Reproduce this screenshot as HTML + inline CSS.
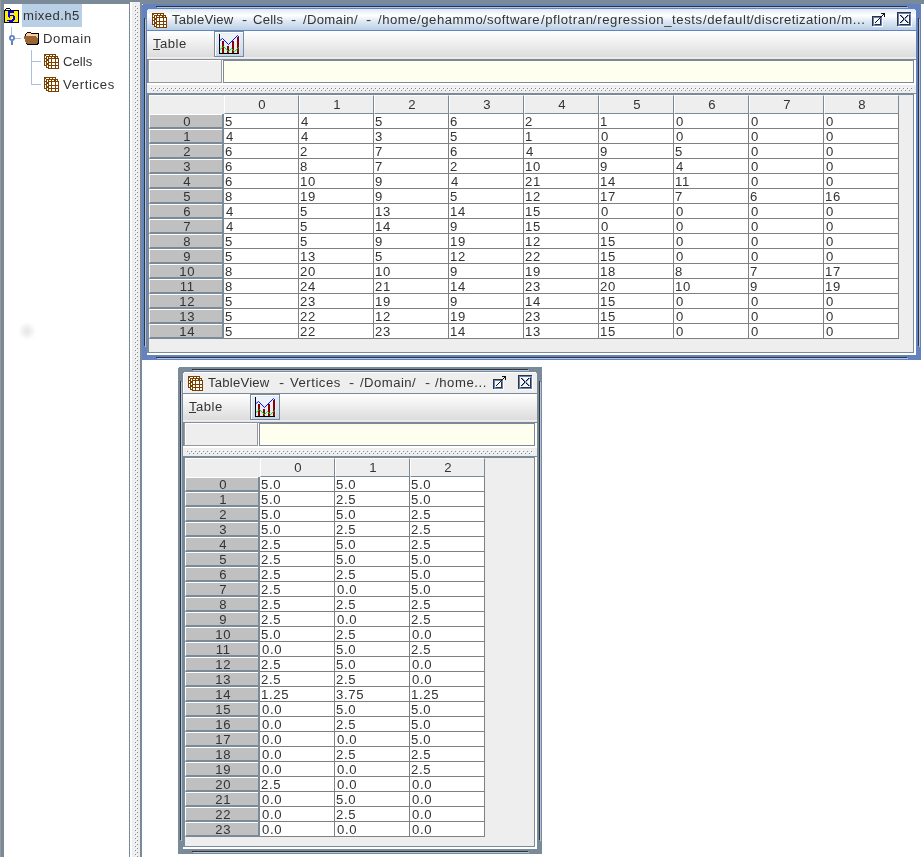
<!DOCTYPE html><html><head><meta charset="utf-8"><title>HDFView</title><style>
html,body{margin:0;padding:0}
body{width:924px;height:857px;position:relative;overflow:hidden;background:#fff;font-family:"Liberation Sans",sans-serif;font-size:12.5px;color:#333}
.abs{position:absolute}
.tx{position:absolute;height:14px;line-height:14px;white-space:pre;transform-origin:0 0}
.btn{position:absolute;width:30px;height:26px;box-sizing:border-box;border:1px solid #7a8a99;background:linear-gradient(#e6eef7 0,#dfe9f4 40%,#c3d6e9 100%);box-shadow:inset 1px 1px 0 #fff}
.ch{position:absolute;width:75px;height:19px;box-sizing:border-box;border-left:1px solid #fff;border-top:1px solid #fff;border-right:1px solid #7a8a99;border-bottom:1px solid #7a8a99;background:#eee;text-align:center}
.rh{position:absolute;width:73px;height:15px;box-sizing:border-box;border-left:1px solid #fff;border-top:1px solid #fff;border-bottom:2px solid #7a8a99;background:#c0c0c0}
.dc{position:absolute;height:14px;line-height:14px;white-space:nowrap;letter-spacing:.6px;transform-origin:0 0;transform:scaleX(1.05)}
.ct{position:absolute;width:60px;height:14px;line-height:14px;text-align:center;white-space:nowrap;letter-spacing:.6px;text-indent:.6px;transform-origin:50% 0;transform:scaleX(1.05)}
#tl{position:absolute;left:0;top:0;width:924px;height:857px;will-change:transform}

</style></head><body>
<div class="abs" style="left:0px;top:0px;width:924px;height:2px;background:#7a8a99"></div>
<div class="abs" style="left:0px;top:2px;width:130px;height:2px;background:#7a8a99"></div>
<div class="abs" style="left:140px;top:2px;width:784px;height:2px;background:#7a8a99"></div>
<div class="abs" style="left:0px;top:0px;width:1px;height:857px;background:#999"></div>
<div class="abs" style="left:1px;top:0px;width:3px;height:857px;background:#7a8a99"></div>
<div class="abs" style="left:129px;top:2px;width:1px;height:855px;background:#7a8a99"></div>
<div class="abs" style="left:132px;top:2px;width:8px;height:855px;background:#eee"></div>
<svg class="abs" style="left:134px;top:5px" width="4" height="852" shape-rendering="crispEdges"><defs><pattern id="bp1" width="4" height="4" patternUnits="userSpaceOnUse"><rect x="0" y="0" width="1" height="1" fill="#fff"/><rect x="1" y="1" width="1" height="1" fill="#7a8a99"/><rect x="2" y="2" width="1" height="1" fill="#fff"/><rect x="3" y="3" width="1" height="1" fill="#7a8a99"/></pattern></defs><rect width="4" height="852" fill="url(#bp1)"/></svg>
<div class="abs" style="left:140px;top:2px;width:2px;height:855px;background:#7a8a99"></div>
<div class="abs" style="left:17px;top:321px;width:20px;height:20px;background:radial-gradient(circle closest-side,#e6e6e6,#f1f1f1 45%,#fbfbfb 75%,#fff 100%)"></div>
<div class="abs" style="left:22px;top:4px;width:60px;height:23px;background:#b8cfe5"></div>
<svg class="abs" style="left:4px;top:8px" width="15" height="15" viewBox="0 0 15 15" shape-rendering="crispEdges"><rect x="2" y="0" width="4" height="1" fill="#000"/><rect x="1" y="1" width="1" height="1" fill="#000"/><rect x="2" y="1" width="4" height="1" fill="#fff"/><rect x="6" y="1" width="1" height="1" fill="#000"/><rect x="0" y="2" width="15" height="1" fill="#000"/><rect x="0" y="3" width="1" height="1" fill="#000"/><rect x="1" y="3" width="3" height="1" fill="#ffee00"/><rect x="4" y="3" width="6" height="1" fill="#0000ff"/><rect x="10" y="3" width="4" height="1" fill="#ffee00"/><rect x="14" y="3" width="1" height="1" fill="#000"/><rect x="0" y="4" width="1" height="1" fill="#000"/><rect x="1" y="4" width="3" height="1" fill="#ffee00"/><rect x="4" y="4" width="6" height="1" fill="#0000ff"/><rect x="10" y="4" width="4" height="1" fill="#ffee00"/><rect x="14" y="4" width="1" height="1" fill="#000"/><rect x="0" y="5" width="1" height="1" fill="#000"/><rect x="1" y="5" width="3" height="1" fill="#ffee00"/><rect x="4" y="5" width="2" height="1" fill="#0000ff"/><rect x="6" y="5" width="8" height="1" fill="#ffee00"/><rect x="14" y="5" width="1" height="1" fill="#000"/><rect x="0" y="6" width="1" height="1" fill="#000"/><rect x="1" y="6" width="3" height="1" fill="#ffee00"/><rect x="4" y="6" width="2" height="1" fill="#0000ff"/><rect x="6" y="6" width="8" height="1" fill="#ffee00"/><rect x="14" y="6" width="1" height="1" fill="#000"/><rect x="0" y="7" width="1" height="1" fill="#000"/><rect x="1" y="7" width="3" height="1" fill="#ffee00"/><rect x="4" y="7" width="6" height="1" fill="#0000ff"/><rect x="10" y="7" width="4" height="1" fill="#ffee00"/><rect x="14" y="7" width="1" height="1" fill="#000"/><rect x="0" y="8" width="1" height="1" fill="#000"/><rect x="1" y="8" width="3" height="1" fill="#ffee00"/><rect x="4" y="8" width="2" height="1" fill="#0000ff"/><rect x="6" y="8" width="3" height="1" fill="#ffee00"/><rect x="9" y="8" width="2" height="1" fill="#0000ff"/><rect x="11" y="8" width="3" height="1" fill="#ffee00"/><rect x="14" y="8" width="1" height="1" fill="#000"/><rect x="0" y="9" width="1" height="1" fill="#000"/><rect x="1" y="9" width="4" height="1" fill="#ffee00"/><rect x="5" y="9" width="1" height="1" fill="#0000ff"/><rect x="6" y="9" width="3" height="1" fill="#ffee00"/><rect x="9" y="9" width="2" height="1" fill="#0000ff"/><rect x="11" y="9" width="3" height="1" fill="#ffee00"/><rect x="14" y="9" width="1" height="1" fill="#000"/><rect x="0" y="10" width="1" height="1" fill="#000"/><rect x="1" y="10" width="8" height="1" fill="#ffee00"/><rect x="9" y="10" width="2" height="1" fill="#0000ff"/><rect x="11" y="10" width="3" height="1" fill="#ffee00"/><rect x="14" y="10" width="1" height="1" fill="#000"/><rect x="0" y="11" width="1" height="1" fill="#000"/><rect x="1" y="11" width="7" height="1" fill="#ffee00"/><rect x="8" y="11" width="3" height="1" fill="#0000ff"/><rect x="11" y="11" width="3" height="1" fill="#ffee00"/><rect x="14" y="11" width="1" height="1" fill="#000"/><rect x="0" y="12" width="1" height="1" fill="#000"/><rect x="1" y="12" width="2" height="1" fill="#ffee00"/><rect x="3" y="12" width="7" height="1" fill="#0000ff"/><rect x="10" y="12" width="4" height="1" fill="#ffee00"/><rect x="14" y="12" width="1" height="1" fill="#000"/><rect x="0" y="13" width="1" height="1" fill="#000"/><rect x="1" y="13" width="4" height="1" fill="#ffee00"/><rect x="5" y="13" width="4" height="1" fill="#0000ff"/><rect x="9" y="13" width="5" height="1" fill="#ffee00"/><rect x="14" y="13" width="1" height="1" fill="#000"/><rect x="0" y="14" width="15" height="1" fill="#000"/></svg>
<div class="abs" style="left:11px;top:27px;width:1px;height:8px;background:#a9c0e0"></div>
<div class="abs" style="left:15px;top:38px;width:6px;height:1px;background:#a9c0e0"></div>
<svg class="abs" style="left:9px;top:35px" width="6" height="10" viewBox="0 0 6 10"><circle cx="3" cy="3" r="2.1" fill="#fff" stroke="#6382bf" stroke-width="1.8"/><rect x="2" y="6" width="2" height="4" fill="#6382bf" shape-rendering="crispEdges"/></svg>
<svg class="abs" style="left:24px;top:32px" width="15" height="13" viewBox="0 0 15 13" shape-rendering="crispEdges"><rect x="3" y="0" width="4" height="1" fill="#000"/><rect x="2" y="1" width="1" height="1" fill="#000"/><rect x="3" y="1" width="4" height="1" fill="#ffcc99"/><rect x="7" y="1" width="8" height="1" fill="#000"/><rect x="1" y="2" width="1" height="1" fill="#000"/><rect x="2" y="2" width="11" height="1" fill="#ffcc99"/><rect x="13" y="2" width="1" height="1" fill="#ffcc99"/><rect x="14" y="2" width="1" height="1" fill="#000"/><rect x="1" y="3" width="1" height="1" fill="#000"/><rect x="2" y="3" width="11" height="1" fill="#ffcc99"/><rect x="13" y="3" width="1" height="1" fill="#ffcc99"/><rect x="14" y="3" width="1" height="1" fill="#000"/><rect x="0" y="4" width="12" height="1" fill="#996633"/><rect x="12" y="4" width="2" height="1" fill="#ffcc99"/><rect x="14" y="4" width="1" height="1" fill="#000"/><rect x="0" y="5" width="13" height="1" fill="#996633"/><rect x="13" y="5" width="1" height="1" fill="#ffcc99"/><rect x="14" y="5" width="1" height="1" fill="#000"/><rect x="0" y="6" width="13" height="1" fill="#996633"/><rect x="13" y="6" width="1" height="1" fill="#996633"/><rect x="14" y="6" width="1" height="1" fill="#000"/><rect x="1" y="7" width="12" height="1" fill="#996633"/><rect x="13" y="7" width="1" height="1" fill="#996633"/><rect x="14" y="7" width="1" height="1" fill="#000"/><rect x="1" y="8" width="12" height="1" fill="#996633"/><rect x="13" y="8" width="1" height="1" fill="#996633"/><rect x="14" y="8" width="1" height="1" fill="#000"/><rect x="1" y="9" width="12" height="1" fill="#996633"/><rect x="13" y="9" width="1" height="1" fill="#996633"/><rect x="14" y="9" width="1" height="1" fill="#000"/><rect x="2" y="10" width="12" height="1" fill="#996633"/><rect x="14" y="10" width="1" height="1" fill="#000"/><rect x="2" y="11" width="1" height="1" fill="#000"/><rect x="3" y="11" width="10" height="1" fill="#996633"/><rect x="13" y="11" width="2" height="1" fill="#000"/><rect x="3" y="12" width="11" height="1" fill="#000"/></svg>
<div class="abs" style="left:31px;top:50px;width:1px;height:35px;background:#a9c0e0"></div>
<div class="abs" style="left:31px;top:61px;width:10px;height:1px;background:#a9c0e0"></div>
<div class="abs" style="left:31px;top:84px;width:10px;height:1px;background:#a9c0e0"></div>
<svg class="abs" style="left:44px;top:54px" width="15" height="15" viewBox="0 0 15 15" shape-rendering="crispEdges"><rect x="0" y="0" width="12" height="1" fill="#7b3f00"/><rect x="0" y="1" width="2" height="1" fill="#7b3f00"/><rect x="2" y="1" width="3" height="1" fill="#fff"/><rect x="5" y="1" width="1" height="1" fill="#7b3f00"/><rect x="6" y="1" width="2" height="1" fill="#fff"/><rect x="8" y="1" width="1" height="1" fill="#7b3f00"/><rect x="9" y="1" width="2" height="1" fill="#fff"/><rect x="11" y="1" width="1" height="1" fill="#7b3f00"/><rect x="0" y="2" width="1" height="1" fill="#7b3f00"/><rect x="1" y="2" width="1" height="1" fill="#fff"/><rect x="2" y="2" width="12" height="1" fill="#7b3f00"/><rect x="0" y="3" width="1" height="1" fill="#7b3f00"/><rect x="1" y="3" width="1" height="1" fill="#fff"/><rect x="2" y="3" width="1" height="1" fill="#7b3f00"/><rect x="3" y="3" width="1" height="1" fill="#fff"/><rect x="4" y="3" width="1" height="1" fill="#7b3f00"/><rect x="5" y="3" width="2" height="1" fill="#fff"/><rect x="7" y="3" width="1" height="1" fill="#7b3f00"/><rect x="8" y="3" width="2" height="1" fill="#fff"/><rect x="10" y="3" width="2" height="1" fill="#7b3f00"/><rect x="12" y="3" width="1" height="1" fill="#fff"/><rect x="13" y="3" width="1" height="1" fill="#7b3f00"/><rect x="0" y="4" width="3" height="1" fill="#7b3f00"/><rect x="3" y="4" width="1" height="1" fill="#fff"/><rect x="4" y="4" width="11" height="1" fill="#7b3f00"/><rect x="0" y="5" width="1" height="1" fill="#7b3f00"/><rect x="1" y="5" width="1" height="1" fill="#fff"/><rect x="2" y="5" width="3" height="1" fill="#7b3f00"/><rect x="5" y="5" width="2" height="1" fill="#fff"/><rect x="7" y="5" width="1" height="1" fill="#7b3f00"/><rect x="8" y="5" width="3" height="1" fill="#fff"/><rect x="11" y="5" width="1" height="1" fill="#7b3f00"/><rect x="12" y="5" width="2" height="1" fill="#fff"/><rect x="14" y="5" width="1" height="1" fill="#7b3f00"/><rect x="0" y="6" width="1" height="1" fill="#7b3f00"/><rect x="1" y="6" width="1" height="1" fill="#fff"/><rect x="2" y="6" width="3" height="1" fill="#7b3f00"/><rect x="5" y="6" width="2" height="1" fill="#fff"/><rect x="7" y="6" width="1" height="1" fill="#7b3f00"/><rect x="8" y="6" width="3" height="1" fill="#fff"/><rect x="11" y="6" width="1" height="1" fill="#7b3f00"/><rect x="12" y="6" width="2" height="1" fill="#fff"/><rect x="14" y="6" width="1" height="1" fill="#7b3f00"/><rect x="0" y="7" width="3" height="1" fill="#7b3f00"/><rect x="3" y="7" width="1" height="1" fill="#fff"/><rect x="4" y="7" width="1" height="1" fill="#7b3f00"/><rect x="5" y="7" width="2" height="1" fill="#fff"/><rect x="7" y="7" width="1" height="1" fill="#7b3f00"/><rect x="8" y="7" width="3" height="1" fill="#fff"/><rect x="11" y="7" width="1" height="1" fill="#7b3f00"/><rect x="12" y="7" width="2" height="1" fill="#fff"/><rect x="14" y="7" width="1" height="1" fill="#7b3f00"/><rect x="0" y="8" width="1" height="1" fill="#7b3f00"/><rect x="1" y="8" width="1" height="1" fill="#fff"/><rect x="2" y="8" width="1" height="1" fill="#7b3f00"/><rect x="3" y="8" width="1" height="1" fill="#fff"/><rect x="4" y="8" width="11" height="1" fill="#7b3f00"/><rect x="0" y="9" width="1" height="1" fill="#7b3f00"/><rect x="1" y="9" width="1" height="1" fill="#fff"/><rect x="2" y="9" width="3" height="1" fill="#7b3f00"/><rect x="5" y="9" width="2" height="1" fill="#fff"/><rect x="7" y="9" width="1" height="1" fill="#7b3f00"/><rect x="8" y="9" width="3" height="1" fill="#fff"/><rect x="11" y="9" width="1" height="1" fill="#7b3f00"/><rect x="12" y="9" width="2" height="1" fill="#fff"/><rect x="14" y="9" width="1" height="1" fill="#7b3f00"/><rect x="0" y="10" width="1" height="1" fill="#7b3f00"/><rect x="1" y="10" width="1" height="1" fill="#fff"/><rect x="2" y="10" width="3" height="1" fill="#7b3f00"/><rect x="5" y="10" width="2" height="1" fill="#fff"/><rect x="7" y="10" width="1" height="1" fill="#7b3f00"/><rect x="8" y="10" width="3" height="1" fill="#fff"/><rect x="11" y="10" width="1" height="1" fill="#7b3f00"/><rect x="12" y="10" width="2" height="1" fill="#fff"/><rect x="14" y="10" width="1" height="1" fill="#7b3f00"/><rect x="0" y="11" width="3" height="1" fill="#7b3f00"/><rect x="3" y="11" width="1" height="1" fill="#fff"/><rect x="4" y="11" width="11" height="1" fill="#7b3f00"/><rect x="2" y="12" width="1" height="1" fill="#7b3f00"/><rect x="3" y="12" width="1" height="1" fill="#fff"/><rect x="4" y="12" width="1" height="1" fill="#7b3f00"/><rect x="5" y="12" width="2" height="1" fill="#fff"/><rect x="7" y="12" width="1" height="1" fill="#7b3f00"/><rect x="8" y="12" width="3" height="1" fill="#fff"/><rect x="11" y="12" width="1" height="1" fill="#7b3f00"/><rect x="12" y="12" width="2" height="1" fill="#fff"/><rect x="14" y="12" width="1" height="1" fill="#7b3f00"/><rect x="2" y="13" width="3" height="1" fill="#7b3f00"/><rect x="5" y="13" width="2" height="1" fill="#fff"/><rect x="7" y="13" width="1" height="1" fill="#7b3f00"/><rect x="8" y="13" width="3" height="1" fill="#fff"/><rect x="11" y="13" width="1" height="1" fill="#7b3f00"/><rect x="12" y="13" width="2" height="1" fill="#fff"/><rect x="14" y="13" width="1" height="1" fill="#7b3f00"/><rect x="4" y="14" width="11" height="1" fill="#7b3f00"/></svg>
<svg class="abs" style="left:44px;top:77px" width="15" height="15" viewBox="0 0 15 15" shape-rendering="crispEdges"><rect x="0" y="0" width="12" height="1" fill="#7b3f00"/><rect x="0" y="1" width="2" height="1" fill="#7b3f00"/><rect x="2" y="1" width="3" height="1" fill="#fff"/><rect x="5" y="1" width="1" height="1" fill="#7b3f00"/><rect x="6" y="1" width="2" height="1" fill="#fff"/><rect x="8" y="1" width="1" height="1" fill="#7b3f00"/><rect x="9" y="1" width="2" height="1" fill="#fff"/><rect x="11" y="1" width="1" height="1" fill="#7b3f00"/><rect x="0" y="2" width="1" height="1" fill="#7b3f00"/><rect x="1" y="2" width="1" height="1" fill="#fff"/><rect x="2" y="2" width="12" height="1" fill="#7b3f00"/><rect x="0" y="3" width="1" height="1" fill="#7b3f00"/><rect x="1" y="3" width="1" height="1" fill="#fff"/><rect x="2" y="3" width="1" height="1" fill="#7b3f00"/><rect x="3" y="3" width="1" height="1" fill="#fff"/><rect x="4" y="3" width="1" height="1" fill="#7b3f00"/><rect x="5" y="3" width="2" height="1" fill="#fff"/><rect x="7" y="3" width="1" height="1" fill="#7b3f00"/><rect x="8" y="3" width="2" height="1" fill="#fff"/><rect x="10" y="3" width="2" height="1" fill="#7b3f00"/><rect x="12" y="3" width="1" height="1" fill="#fff"/><rect x="13" y="3" width="1" height="1" fill="#7b3f00"/><rect x="0" y="4" width="3" height="1" fill="#7b3f00"/><rect x="3" y="4" width="1" height="1" fill="#fff"/><rect x="4" y="4" width="11" height="1" fill="#7b3f00"/><rect x="0" y="5" width="1" height="1" fill="#7b3f00"/><rect x="1" y="5" width="1" height="1" fill="#fff"/><rect x="2" y="5" width="3" height="1" fill="#7b3f00"/><rect x="5" y="5" width="2" height="1" fill="#fff"/><rect x="7" y="5" width="1" height="1" fill="#7b3f00"/><rect x="8" y="5" width="3" height="1" fill="#fff"/><rect x="11" y="5" width="1" height="1" fill="#7b3f00"/><rect x="12" y="5" width="2" height="1" fill="#fff"/><rect x="14" y="5" width="1" height="1" fill="#7b3f00"/><rect x="0" y="6" width="1" height="1" fill="#7b3f00"/><rect x="1" y="6" width="1" height="1" fill="#fff"/><rect x="2" y="6" width="3" height="1" fill="#7b3f00"/><rect x="5" y="6" width="2" height="1" fill="#fff"/><rect x="7" y="6" width="1" height="1" fill="#7b3f00"/><rect x="8" y="6" width="3" height="1" fill="#fff"/><rect x="11" y="6" width="1" height="1" fill="#7b3f00"/><rect x="12" y="6" width="2" height="1" fill="#fff"/><rect x="14" y="6" width="1" height="1" fill="#7b3f00"/><rect x="0" y="7" width="3" height="1" fill="#7b3f00"/><rect x="3" y="7" width="1" height="1" fill="#fff"/><rect x="4" y="7" width="1" height="1" fill="#7b3f00"/><rect x="5" y="7" width="2" height="1" fill="#fff"/><rect x="7" y="7" width="1" height="1" fill="#7b3f00"/><rect x="8" y="7" width="3" height="1" fill="#fff"/><rect x="11" y="7" width="1" height="1" fill="#7b3f00"/><rect x="12" y="7" width="2" height="1" fill="#fff"/><rect x="14" y="7" width="1" height="1" fill="#7b3f00"/><rect x="0" y="8" width="1" height="1" fill="#7b3f00"/><rect x="1" y="8" width="1" height="1" fill="#fff"/><rect x="2" y="8" width="1" height="1" fill="#7b3f00"/><rect x="3" y="8" width="1" height="1" fill="#fff"/><rect x="4" y="8" width="11" height="1" fill="#7b3f00"/><rect x="0" y="9" width="1" height="1" fill="#7b3f00"/><rect x="1" y="9" width="1" height="1" fill="#fff"/><rect x="2" y="9" width="3" height="1" fill="#7b3f00"/><rect x="5" y="9" width="2" height="1" fill="#fff"/><rect x="7" y="9" width="1" height="1" fill="#7b3f00"/><rect x="8" y="9" width="3" height="1" fill="#fff"/><rect x="11" y="9" width="1" height="1" fill="#7b3f00"/><rect x="12" y="9" width="2" height="1" fill="#fff"/><rect x="14" y="9" width="1" height="1" fill="#7b3f00"/><rect x="0" y="10" width="1" height="1" fill="#7b3f00"/><rect x="1" y="10" width="1" height="1" fill="#fff"/><rect x="2" y="10" width="3" height="1" fill="#7b3f00"/><rect x="5" y="10" width="2" height="1" fill="#fff"/><rect x="7" y="10" width="1" height="1" fill="#7b3f00"/><rect x="8" y="10" width="3" height="1" fill="#fff"/><rect x="11" y="10" width="1" height="1" fill="#7b3f00"/><rect x="12" y="10" width="2" height="1" fill="#fff"/><rect x="14" y="10" width="1" height="1" fill="#7b3f00"/><rect x="0" y="11" width="3" height="1" fill="#7b3f00"/><rect x="3" y="11" width="1" height="1" fill="#fff"/><rect x="4" y="11" width="11" height="1" fill="#7b3f00"/><rect x="2" y="12" width="1" height="1" fill="#7b3f00"/><rect x="3" y="12" width="1" height="1" fill="#fff"/><rect x="4" y="12" width="1" height="1" fill="#7b3f00"/><rect x="5" y="12" width="2" height="1" fill="#fff"/><rect x="7" y="12" width="1" height="1" fill="#7b3f00"/><rect x="8" y="12" width="3" height="1" fill="#fff"/><rect x="11" y="12" width="1" height="1" fill="#7b3f00"/><rect x="12" y="12" width="2" height="1" fill="#fff"/><rect x="14" y="12" width="1" height="1" fill="#7b3f00"/><rect x="2" y="13" width="3" height="1" fill="#7b3f00"/><rect x="5" y="13" width="2" height="1" fill="#fff"/><rect x="7" y="13" width="1" height="1" fill="#7b3f00"/><rect x="8" y="13" width="3" height="1" fill="#fff"/><rect x="11" y="13" width="1" height="1" fill="#7b3f00"/><rect x="12" y="13" width="2" height="1" fill="#fff"/><rect x="14" y="13" width="1" height="1" fill="#7b3f00"/><rect x="4" y="14" width="11" height="1" fill="#7b3f00"/></svg>
<div class="abs" style="left:142px;top:4px;width:779px;height:356px;background:#6382bf"></div>
<div class="abs" style="left:142px;top:4px;width:1px;height:1px;background:#fff"></div>
<div class="abs" style="left:156px;top:6px;width:751px;height:1px;background:#333"></div>
<div class="abs" style="left:157px;top:7px;width:751px;height:1px;background:#aec6e6"></div>
<div class="abs" style="left:156px;top:357px;width:751px;height:1px;background:#333"></div>
<div class="abs" style="left:157px;top:358px;width:751px;height:1px;background:#aec6e6"></div>
<div class="abs" style="left:144px;top:18px;width:1px;height:328px;background:#333"></div>
<div class="abs" style="left:145px;top:19px;width:1px;height:328px;background:#aec6e6"></div>
<div class="abs" style="left:918px;top:18px;width:1px;height:328px;background:#333"></div>
<div class="abs" style="left:919px;top:19px;width:1px;height:328px;background:#aec6e6"></div>
<div class="abs" style="left:147px;top:9px;width:769px;height:346px;background:#eee"></div>
<div class="abs" style="left:147px;top:9px;width:769px;height:21px;background:linear-gradient(#dde8f3 0,#fff 30%,#dde8f3 60%,#b8cfe5 100%)"></div>
<div class="abs" style="left:147px;top:9px;width:1px;height:1px;background:#6382bf"></div>
<div class="abs" style="left:915px;top:9px;width:1px;height:1px;background:#6382bf"></div>
<div class="abs" style="left:147px;top:30px;width:769px;height:1px;background:#6382bf"></div>
<svg class="abs" style="left:152px;top:13px" width="15" height="15" viewBox="0 0 15 15" shape-rendering="crispEdges"><rect x="0" y="0" width="12" height="1" fill="#7b3f00"/><rect x="0" y="1" width="2" height="1" fill="#7b3f00"/><rect x="2" y="1" width="3" height="1" fill="#fff"/><rect x="5" y="1" width="1" height="1" fill="#7b3f00"/><rect x="6" y="1" width="2" height="1" fill="#fff"/><rect x="8" y="1" width="1" height="1" fill="#7b3f00"/><rect x="9" y="1" width="2" height="1" fill="#fff"/><rect x="11" y="1" width="1" height="1" fill="#7b3f00"/><rect x="0" y="2" width="1" height="1" fill="#7b3f00"/><rect x="1" y="2" width="1" height="1" fill="#fff"/><rect x="2" y="2" width="12" height="1" fill="#7b3f00"/><rect x="0" y="3" width="1" height="1" fill="#7b3f00"/><rect x="1" y="3" width="1" height="1" fill="#fff"/><rect x="2" y="3" width="1" height="1" fill="#7b3f00"/><rect x="3" y="3" width="1" height="1" fill="#fff"/><rect x="4" y="3" width="1" height="1" fill="#7b3f00"/><rect x="5" y="3" width="2" height="1" fill="#fff"/><rect x="7" y="3" width="1" height="1" fill="#7b3f00"/><rect x="8" y="3" width="2" height="1" fill="#fff"/><rect x="10" y="3" width="2" height="1" fill="#7b3f00"/><rect x="12" y="3" width="1" height="1" fill="#fff"/><rect x="13" y="3" width="1" height="1" fill="#7b3f00"/><rect x="0" y="4" width="3" height="1" fill="#7b3f00"/><rect x="3" y="4" width="1" height="1" fill="#fff"/><rect x="4" y="4" width="11" height="1" fill="#7b3f00"/><rect x="0" y="5" width="1" height="1" fill="#7b3f00"/><rect x="1" y="5" width="1" height="1" fill="#fff"/><rect x="2" y="5" width="3" height="1" fill="#7b3f00"/><rect x="5" y="5" width="2" height="1" fill="#fff"/><rect x="7" y="5" width="1" height="1" fill="#7b3f00"/><rect x="8" y="5" width="3" height="1" fill="#fff"/><rect x="11" y="5" width="1" height="1" fill="#7b3f00"/><rect x="12" y="5" width="2" height="1" fill="#fff"/><rect x="14" y="5" width="1" height="1" fill="#7b3f00"/><rect x="0" y="6" width="1" height="1" fill="#7b3f00"/><rect x="1" y="6" width="1" height="1" fill="#fff"/><rect x="2" y="6" width="3" height="1" fill="#7b3f00"/><rect x="5" y="6" width="2" height="1" fill="#fff"/><rect x="7" y="6" width="1" height="1" fill="#7b3f00"/><rect x="8" y="6" width="3" height="1" fill="#fff"/><rect x="11" y="6" width="1" height="1" fill="#7b3f00"/><rect x="12" y="6" width="2" height="1" fill="#fff"/><rect x="14" y="6" width="1" height="1" fill="#7b3f00"/><rect x="0" y="7" width="3" height="1" fill="#7b3f00"/><rect x="3" y="7" width="1" height="1" fill="#fff"/><rect x="4" y="7" width="1" height="1" fill="#7b3f00"/><rect x="5" y="7" width="2" height="1" fill="#fff"/><rect x="7" y="7" width="1" height="1" fill="#7b3f00"/><rect x="8" y="7" width="3" height="1" fill="#fff"/><rect x="11" y="7" width="1" height="1" fill="#7b3f00"/><rect x="12" y="7" width="2" height="1" fill="#fff"/><rect x="14" y="7" width="1" height="1" fill="#7b3f00"/><rect x="0" y="8" width="1" height="1" fill="#7b3f00"/><rect x="1" y="8" width="1" height="1" fill="#fff"/><rect x="2" y="8" width="1" height="1" fill="#7b3f00"/><rect x="3" y="8" width="1" height="1" fill="#fff"/><rect x="4" y="8" width="11" height="1" fill="#7b3f00"/><rect x="0" y="9" width="1" height="1" fill="#7b3f00"/><rect x="1" y="9" width="1" height="1" fill="#fff"/><rect x="2" y="9" width="3" height="1" fill="#7b3f00"/><rect x="5" y="9" width="2" height="1" fill="#fff"/><rect x="7" y="9" width="1" height="1" fill="#7b3f00"/><rect x="8" y="9" width="3" height="1" fill="#fff"/><rect x="11" y="9" width="1" height="1" fill="#7b3f00"/><rect x="12" y="9" width="2" height="1" fill="#fff"/><rect x="14" y="9" width="1" height="1" fill="#7b3f00"/><rect x="0" y="10" width="1" height="1" fill="#7b3f00"/><rect x="1" y="10" width="1" height="1" fill="#fff"/><rect x="2" y="10" width="3" height="1" fill="#7b3f00"/><rect x="5" y="10" width="2" height="1" fill="#fff"/><rect x="7" y="10" width="1" height="1" fill="#7b3f00"/><rect x="8" y="10" width="3" height="1" fill="#fff"/><rect x="11" y="10" width="1" height="1" fill="#7b3f00"/><rect x="12" y="10" width="2" height="1" fill="#fff"/><rect x="14" y="10" width="1" height="1" fill="#7b3f00"/><rect x="0" y="11" width="3" height="1" fill="#7b3f00"/><rect x="3" y="11" width="1" height="1" fill="#fff"/><rect x="4" y="11" width="11" height="1" fill="#7b3f00"/><rect x="2" y="12" width="1" height="1" fill="#7b3f00"/><rect x="3" y="12" width="1" height="1" fill="#fff"/><rect x="4" y="12" width="1" height="1" fill="#7b3f00"/><rect x="5" y="12" width="2" height="1" fill="#fff"/><rect x="7" y="12" width="1" height="1" fill="#7b3f00"/><rect x="8" y="12" width="3" height="1" fill="#fff"/><rect x="11" y="12" width="1" height="1" fill="#7b3f00"/><rect x="12" y="12" width="2" height="1" fill="#fff"/><rect x="14" y="12" width="1" height="1" fill="#7b3f00"/><rect x="2" y="13" width="3" height="1" fill="#7b3f00"/><rect x="5" y="13" width="2" height="1" fill="#fff"/><rect x="7" y="13" width="1" height="1" fill="#7b3f00"/><rect x="8" y="13" width="3" height="1" fill="#fff"/><rect x="11" y="13" width="1" height="1" fill="#7b3f00"/><rect x="12" y="13" width="2" height="1" fill="#fff"/><rect x="14" y="13" width="1" height="1" fill="#7b3f00"/><rect x="4" y="14" width="11" height="1" fill="#7b3f00"/></svg>
<svg class="abs" style="left:872px;top:13px" width="14" height="14" viewBox="0 0 14 14" shape-rendering="crispEdges"><rect x="9" y="0" width="4" height="1" fill="#111"/><rect x="11" y="1" width="2" height="1" fill="#111"/><rect x="10" y="2" width="1" height="1" fill="#111"/><rect x="12" y="2" width="1" height="1" fill="#111"/><rect x="0" y="3" width="9" height="1" fill="#333"/><rect x="9" y="3" width="1" height="1" fill="#111"/><rect x="12" y="3" width="1" height="1" fill="#111"/><rect x="0" y="4" width="1" height="1" fill="#333"/><rect x="1" y="4" width="7" height="1" fill="#6382bf"/><rect x="8" y="4" width="1" height="1" fill="#111"/><rect x="9" y="4" width="1" height="1" fill="#6382bf"/><rect x="10" y="4" width="1" height="1" fill="#fff"/><rect x="0" y="5" width="1" height="1" fill="#333"/><rect x="1" y="5" width="1" height="1" fill="#6382bf"/><rect x="2" y="5" width="5" height="1" fill="#f6f9fc"/><rect x="7" y="5" width="1" height="1" fill="#111"/><rect x="8" y="5" width="2" height="1" fill="#6382bf"/><rect x="10" y="5" width="1" height="1" fill="#fff"/><rect x="0" y="6" width="1" height="1" fill="#333"/><rect x="1" y="6" width="1" height="1" fill="#6382bf"/><rect x="2" y="6" width="4" height="1" fill="#f6f9fc"/><rect x="6" y="6" width="1" height="1" fill="#111"/><rect x="7" y="6" width="1" height="1" fill="#f6f9fc"/><rect x="8" y="6" width="1" height="1" fill="#333"/><rect x="9" y="6" width="1" height="1" fill="#6382bf"/><rect x="10" y="6" width="1" height="1" fill="#fff"/><rect x="0" y="7" width="1" height="1" fill="#333"/><rect x="1" y="7" width="1" height="1" fill="#6382bf"/><rect x="2" y="7" width="3" height="1" fill="#f6f9fc"/><rect x="5" y="7" width="1" height="1" fill="#111"/><rect x="6" y="7" width="2" height="1" fill="#f6f9fc"/><rect x="8" y="7" width="1" height="1" fill="#333"/><rect x="9" y="7" width="1" height="1" fill="#6382bf"/><rect x="10" y="7" width="1" height="1" fill="#fff"/><rect x="0" y="8" width="1" height="1" fill="#333"/><rect x="1" y="8" width="1" height="1" fill="#6382bf"/><rect x="2" y="8" width="2" height="1" fill="#f6f9fc"/><rect x="4" y="8" width="1" height="1" fill="#111"/><rect x="5" y="8" width="3" height="1" fill="#f6f9fc"/><rect x="8" y="8" width="1" height="1" fill="#333"/><rect x="9" y="8" width="1" height="1" fill="#6382bf"/><rect x="10" y="8" width="1" height="1" fill="#fff"/><rect x="0" y="9" width="1" height="1" fill="#333"/><rect x="1" y="9" width="1" height="1" fill="#6382bf"/><rect x="2" y="9" width="1" height="1" fill="#f6f9fc"/><rect x="3" y="9" width="1" height="1" fill="#111"/><rect x="4" y="9" width="4" height="1" fill="#f6f9fc"/><rect x="8" y="9" width="1" height="1" fill="#333"/><rect x="9" y="9" width="1" height="1" fill="#6382bf"/><rect x="10" y="9" width="1" height="1" fill="#fff"/><rect x="0" y="10" width="1" height="1" fill="#333"/><rect x="1" y="10" width="1" height="1" fill="#6382bf"/><rect x="2" y="10" width="6" height="1" fill="#f6f9fc"/><rect x="8" y="10" width="1" height="1" fill="#333"/><rect x="9" y="10" width="1" height="1" fill="#6382bf"/><rect x="10" y="10" width="1" height="1" fill="#fff"/><rect x="0" y="11" width="1" height="1" fill="#333"/><rect x="1" y="11" width="2" height="1" fill="#6382bf"/><rect x="3" y="11" width="6" height="1" fill="#333"/><rect x="9" y="11" width="1" height="1" fill="#6382bf"/><rect x="10" y="11" width="1" height="1" fill="#fff"/><rect x="0" y="12" width="1" height="1" fill="#333"/><rect x="1" y="12" width="9" height="1" fill="#6382bf"/><rect x="10" y="12" width="1" height="1" fill="#fff"/><rect x="1" y="13" width="10" height="1" fill="#fff"/></svg>
<svg class="abs" style="left:897px;top:12px" width="15" height="15" viewBox="0 0 15 15" shape-rendering="crispEdges"><rect x="0" y="0" width="14" height="1" fill="#333"/><rect x="0" y="1" width="1" height="1" fill="#333"/><rect x="1" y="1" width="13" height="1" fill="#6382bf"/><rect x="14" y="1" width="1" height="1" fill="#fff"/><rect x="0" y="2" width="1" height="1" fill="#333"/><rect x="1" y="2" width="1" height="1" fill="#6382bf"/><rect x="2" y="2" width="10" height="1" fill="#f6f9fc"/><rect x="12" y="2" width="2" height="1" fill="#6382bf"/><rect x="14" y="2" width="1" height="1" fill="#fff"/><rect x="0" y="3" width="1" height="1" fill="#333"/><rect x="1" y="3" width="1" height="1" fill="#6382bf"/><rect x="2" y="3" width="1" height="1" fill="#f6f9fc"/><rect x="3" y="3" width="1" height="1" fill="#111"/><rect x="4" y="3" width="1" height="1" fill="#7d98cc"/><rect x="5" y="3" width="5" height="1" fill="#f6f9fc"/><rect x="10" y="3" width="1" height="1" fill="#111"/><rect x="11" y="3" width="1" height="1" fill="#7d98cc"/><rect x="12" y="3" width="1" height="1" fill="#333"/><rect x="13" y="3" width="1" height="1" fill="#6382bf"/><rect x="14" y="3" width="1" height="1" fill="#fff"/><rect x="0" y="4" width="1" height="1" fill="#333"/><rect x="1" y="4" width="1" height="1" fill="#6382bf"/><rect x="2" y="4" width="2" height="1" fill="#f6f9fc"/><rect x="4" y="4" width="1" height="1" fill="#111"/><rect x="5" y="4" width="1" height="1" fill="#7d98cc"/><rect x="6" y="4" width="3" height="1" fill="#f6f9fc"/><rect x="9" y="4" width="1" height="1" fill="#111"/><rect x="10" y="4" width="1" height="1" fill="#7d98cc"/><rect x="11" y="4" width="1" height="1" fill="#f6f9fc"/><rect x="12" y="4" width="1" height="1" fill="#333"/><rect x="13" y="4" width="1" height="1" fill="#6382bf"/><rect x="14" y="4" width="1" height="1" fill="#fff"/><rect x="0" y="5" width="1" height="1" fill="#333"/><rect x="1" y="5" width="1" height="1" fill="#6382bf"/><rect x="2" y="5" width="3" height="1" fill="#f6f9fc"/><rect x="5" y="5" width="1" height="1" fill="#111"/><rect x="6" y="5" width="1" height="1" fill="#7d98cc"/><rect x="7" y="5" width="1" height="1" fill="#f6f9fc"/><rect x="8" y="5" width="1" height="1" fill="#111"/><rect x="9" y="5" width="1" height="1" fill="#7d98cc"/><rect x="10" y="5" width="2" height="1" fill="#f6f9fc"/><rect x="12" y="5" width="1" height="1" fill="#333"/><rect x="13" y="5" width="1" height="1" fill="#6382bf"/><rect x="14" y="5" width="1" height="1" fill="#fff"/><rect x="0" y="6" width="1" height="1" fill="#333"/><rect x="1" y="6" width="1" height="1" fill="#6382bf"/><rect x="2" y="6" width="4" height="1" fill="#f6f9fc"/><rect x="6" y="6" width="1" height="1" fill="#111"/><rect x="7" y="6" width="2" height="1" fill="#7d98cc"/><rect x="9" y="6" width="3" height="1" fill="#f6f9fc"/><rect x="12" y="6" width="1" height="1" fill="#333"/><rect x="13" y="6" width="1" height="1" fill="#6382bf"/><rect x="14" y="6" width="1" height="1" fill="#fff"/><rect x="0" y="7" width="1" height="1" fill="#333"/><rect x="1" y="7" width="1" height="1" fill="#6382bf"/><rect x="2" y="7" width="4" height="1" fill="#f6f9fc"/><rect x="6" y="7" width="1" height="1" fill="#111"/><rect x="7" y="7" width="2" height="1" fill="#7d98cc"/><rect x="9" y="7" width="3" height="1" fill="#f6f9fc"/><rect x="12" y="7" width="1" height="1" fill="#333"/><rect x="13" y="7" width="1" height="1" fill="#6382bf"/><rect x="14" y="7" width="1" height="1" fill="#fff"/><rect x="0" y="8" width="1" height="1" fill="#333"/><rect x="1" y="8" width="1" height="1" fill="#6382bf"/><rect x="2" y="8" width="3" height="1" fill="#f6f9fc"/><rect x="5" y="8" width="1" height="1" fill="#111"/><rect x="6" y="8" width="1" height="1" fill="#7d98cc"/><rect x="7" y="8" width="1" height="1" fill="#f6f9fc"/><rect x="8" y="8" width="1" height="1" fill="#111"/><rect x="9" y="8" width="1" height="1" fill="#7d98cc"/><rect x="10" y="8" width="2" height="1" fill="#f6f9fc"/><rect x="12" y="8" width="1" height="1" fill="#333"/><rect x="13" y="8" width="1" height="1" fill="#6382bf"/><rect x="14" y="8" width="1" height="1" fill="#fff"/><rect x="0" y="9" width="1" height="1" fill="#333"/><rect x="1" y="9" width="1" height="1" fill="#6382bf"/><rect x="2" y="9" width="2" height="1" fill="#f6f9fc"/><rect x="4" y="9" width="1" height="1" fill="#111"/><rect x="5" y="9" width="1" height="1" fill="#7d98cc"/><rect x="6" y="9" width="3" height="1" fill="#f6f9fc"/><rect x="9" y="9" width="1" height="1" fill="#111"/><rect x="10" y="9" width="1" height="1" fill="#7d98cc"/><rect x="11" y="9" width="1" height="1" fill="#f6f9fc"/><rect x="12" y="9" width="1" height="1" fill="#333"/><rect x="13" y="9" width="1" height="1" fill="#6382bf"/><rect x="14" y="9" width="1" height="1" fill="#fff"/><rect x="0" y="10" width="1" height="1" fill="#333"/><rect x="1" y="10" width="1" height="1" fill="#6382bf"/><rect x="2" y="10" width="1" height="1" fill="#f6f9fc"/><rect x="3" y="10" width="1" height="1" fill="#111"/><rect x="4" y="10" width="1" height="1" fill="#7d98cc"/><rect x="5" y="10" width="5" height="1" fill="#f6f9fc"/><rect x="10" y="10" width="1" height="1" fill="#111"/><rect x="11" y="10" width="1" height="1" fill="#7d98cc"/><rect x="12" y="10" width="1" height="1" fill="#333"/><rect x="13" y="10" width="1" height="1" fill="#6382bf"/><rect x="14" y="10" width="1" height="1" fill="#fff"/><rect x="0" y="11" width="1" height="1" fill="#333"/><rect x="1" y="11" width="1" height="1" fill="#6382bf"/><rect x="2" y="11" width="10" height="1" fill="#f6f9fc"/><rect x="12" y="11" width="1" height="1" fill="#333"/><rect x="13" y="11" width="1" height="1" fill="#6382bf"/><rect x="14" y="11" width="1" height="1" fill="#fff"/><rect x="0" y="12" width="1" height="1" fill="#333"/><rect x="1" y="12" width="2" height="1" fill="#6382bf"/><rect x="3" y="12" width="10" height="1" fill="#333"/><rect x="13" y="12" width="1" height="1" fill="#6382bf"/><rect x="14" y="12" width="1" height="1" fill="#fff"/><rect x="0" y="13" width="1" height="1" fill="#333"/><rect x="1" y="13" width="13" height="1" fill="#6382bf"/><rect x="14" y="13" width="1" height="1" fill="#fff"/><rect x="1" y="14" width="14" height="1" fill="#fff"/></svg>
<div class="abs" style="left:147px;top:31px;width:769px;height:26px;background:linear-gradient(#fff 0,#dcdcdc 100%)"></div>
<div class="abs" style="left:147px;top:57px;width:769px;height:1px;background:#eee"></div>
<div class="btn" style="left:214px;top:31px"></div>
<svg class="abs" style="left:219px;top:34px" width="22" height="22" viewBox="0 0 22 22">
<g shape-rendering="crispEdges">
<rect x="0" y="-1" width="21" height="21" fill="#fff" opacity=".35"/>
<rect x="3" y="7" width="2" height="12" fill="#8b0000"/>
<rect x="8" y="12" width="2" height="7" fill="#8b0000"/>
<rect x="13" y="7" width="2" height="12" fill="#8b0000"/>
<rect x="18" y="3" width="2" height="16" fill="#8b0000"/>
<rect x="0" y="0" width="1" height="20" fill="#000"/>
<rect x="0" y="19" width="20" height="1" fill="#000"/>
</g>
<polyline points="1,6.5 3.5,4.5 9.5,10.5 18.5,1.5 20,3" fill="none" stroke="#0000ff" stroke-width="0.95"/>
<polyline points="1,15.5 4.5,12.5 9.5,17.5 12.5,14.5 15.5,17.5 20,13.3" fill="none" stroke="#00e000" stroke-width="0.95"/>
</svg>
<div class="abs" style="left:147px;top:58px;width:769px;height:1px;background:#e9e6e3"></div>
<div class="abs" style="left:147px;top:59px;width:769px;height:1px;background:#7a8a99"></div>
<div class="abs" style="left:147px;top:59px;width:767px;height:24px;background:#7a8a99"></div>
<div class="abs" style="left:148px;top:59px;width:74px;height:24px;background:#999"></div>
<div class="abs" style="left:148px;top:59px;width:74px;height:1px;background:#848f9b"></div>
<div class="abs" style="left:149px;top:60px;width:74px;height:24px;background:#fff"></div>
<div class="abs" style="left:149px;top:60px;width:72px;height:22px;background:#999"></div>
<div class="abs" style="left:149px;top:60px;width:72px;height:22px;background:#fff"></div>
<div class="abs" style="left:150px;top:61px;width:71px;height:21px;background:#eee"></div>
<div class="abs" style="left:148px;top:82px;width:74px;height:1px;background:#999"></div>
<div class="abs" style="left:221px;top:59px;width:1px;height:24px;background:#999"></div>
<div class="abs" style="left:223px;top:59px;width:691px;height:24px;background:#7a8a99"></div>
<div class="abs" style="left:224px;top:61px;width:689px;height:21px;background:#fffff0"></div>
<div class="abs" style="left:914px;top:60px;width:2px;height:24px;background:#fff"></div>
<div class="abs" style="left:147px;top:83px;width:769px;height:2px;background:#fff"></div>
<svg class="abs" style="left:150px;top:87px" width="762" height="4" shape-rendering="crispEdges"><defs><pattern id="bp2" width="4" height="4" patternUnits="userSpaceOnUse"><rect x="0" y="0" width="1" height="1" fill="#fff"/><rect x="1" y="1" width="1" height="1" fill="#7a8a99"/><rect x="2" y="2" width="1" height="1" fill="#fff"/><rect x="3" y="3" width="1" height="1" fill="#7a8a99"/></pattern></defs><rect width="762" height="4" fill="url(#bp2)"/></svg>
<div class="abs" style="left:147px;top:93px;width:767px;height:260px;background:#7a8a99"></div>
<div class="abs" style="left:147px;top:353px;width:769px;height:2px;background:#fff"></div>
<div class="abs" style="left:914px;top:94px;width:2px;height:261px;background:#fff"></div>
<div class="abs" style="left:914px;top:93px;width:2px;height:1px;background:#7a8a99"></div>
<div class="abs" style="left:149px;top:95px;width:764px;height:257px;background:#eee"></div>
<div class="abs" style="left:149px;top:95px;width:73px;height:19px;background:#eee;border-left:1px solid #fff;border-top:1px solid #fff;box-sizing:border-box"></div>
<div class="abs" style="left:224px;top:114px;width:675px;height:225px;background:#fff"></div>
<div class="abs" style="left:222px;top:114px;width:2px;height:225px;background:#7a8a99"></div>
<div class="ch" style="left:224px;top:95px"></div>
<div class="ch" style="left:299px;top:95px"></div>
<div class="ch" style="left:374px;top:95px"></div>
<div class="ch" style="left:449px;top:95px"></div>
<div class="ch" style="left:524px;top:95px"></div>
<div class="ch" style="left:599px;top:95px"></div>
<div class="ch" style="left:674px;top:95px"></div>
<div class="ch" style="left:749px;top:95px"></div>
<div class="ch" style="left:824px;top:95px"></div>
<div class="rh" style="left:149px;top:114px"></div>
<div class="abs" style="left:224px;top:128px;width:675px;height:1px;background:#808080"></div>
<div class="rh" style="left:149px;top:129px"></div>
<div class="abs" style="left:224px;top:143px;width:675px;height:1px;background:#808080"></div>
<div class="rh" style="left:149px;top:144px"></div>
<div class="abs" style="left:224px;top:158px;width:675px;height:1px;background:#808080"></div>
<div class="rh" style="left:149px;top:159px"></div>
<div class="abs" style="left:224px;top:173px;width:675px;height:1px;background:#808080"></div>
<div class="rh" style="left:149px;top:174px"></div>
<div class="abs" style="left:224px;top:188px;width:675px;height:1px;background:#808080"></div>
<div class="rh" style="left:149px;top:189px"></div>
<div class="abs" style="left:224px;top:203px;width:675px;height:1px;background:#808080"></div>
<div class="rh" style="left:149px;top:204px"></div>
<div class="abs" style="left:224px;top:218px;width:675px;height:1px;background:#808080"></div>
<div class="rh" style="left:149px;top:219px"></div>
<div class="abs" style="left:224px;top:233px;width:675px;height:1px;background:#808080"></div>
<div class="rh" style="left:149px;top:234px"></div>
<div class="abs" style="left:224px;top:248px;width:675px;height:1px;background:#808080"></div>
<div class="rh" style="left:149px;top:249px"></div>
<div class="abs" style="left:224px;top:263px;width:675px;height:1px;background:#808080"></div>
<div class="rh" style="left:149px;top:264px"></div>
<div class="abs" style="left:224px;top:278px;width:675px;height:1px;background:#808080"></div>
<div class="rh" style="left:149px;top:279px"></div>
<div class="abs" style="left:224px;top:293px;width:675px;height:1px;background:#808080"></div>
<div class="rh" style="left:149px;top:294px"></div>
<div class="abs" style="left:224px;top:308px;width:675px;height:1px;background:#808080"></div>
<div class="rh" style="left:149px;top:309px"></div>
<div class="abs" style="left:224px;top:323px;width:675px;height:1px;background:#808080"></div>
<div class="rh" style="left:149px;top:324px"></div>
<div class="abs" style="left:224px;top:338px;width:675px;height:1px;background:#808080"></div>
<div class="abs" style="left:298px;top:114px;width:1px;height:225px;background:#808080"></div>
<div class="abs" style="left:373px;top:114px;width:1px;height:225px;background:#808080"></div>
<div class="abs" style="left:448px;top:114px;width:1px;height:225px;background:#808080"></div>
<div class="abs" style="left:523px;top:114px;width:1px;height:225px;background:#808080"></div>
<div class="abs" style="left:598px;top:114px;width:1px;height:225px;background:#808080"></div>
<div class="abs" style="left:673px;top:114px;width:1px;height:225px;background:#808080"></div>
<div class="abs" style="left:748px;top:114px;width:1px;height:225px;background:#808080"></div>
<div class="abs" style="left:823px;top:114px;width:1px;height:225px;background:#808080"></div>
<div class="abs" style="left:898px;top:114px;width:1px;height:225px;background:#808080"></div>
<div class="abs" style="left:178px;top:367px;width:364px;height:487px;background:#7a8a99"></div>
<div class="abs" style="left:178px;top:367px;width:1px;height:1px;background:#fff"></div>
<div class="abs" style="left:192px;top:369px;width:336px;height:1px;background:#333"></div>
<div class="abs" style="left:193px;top:370px;width:336px;height:1px;background:#aec6e6"></div>
<div class="abs" style="left:192px;top:851px;width:336px;height:1px;background:#333"></div>
<div class="abs" style="left:193px;top:852px;width:336px;height:1px;background:#aec6e6"></div>
<div class="abs" style="left:180px;top:381px;width:1px;height:459px;background:#333"></div>
<div class="abs" style="left:181px;top:382px;width:1px;height:459px;background:#aec6e6"></div>
<div class="abs" style="left:539px;top:381px;width:1px;height:459px;background:#333"></div>
<div class="abs" style="left:540px;top:382px;width:1px;height:459px;background:#aec6e6"></div>
<div class="abs" style="left:183px;top:372px;width:354px;height:477px;background:#eee"></div>
<div class="abs" style="left:183px;top:372px;width:354px;height:21px;background:#eee"></div>
<div class="abs" style="left:183px;top:372px;width:354px;height:1px;background:#fff"></div>
<div class="abs" style="left:183px;top:372px;width:1px;height:21px;background:#fff"></div>
<div class="abs" style="left:183px;top:372px;width:1px;height:1px;background:#7a8a99"></div>
<div class="abs" style="left:536px;top:372px;width:1px;height:1px;background:#7a8a99"></div>
<div class="abs" style="left:183px;top:393px;width:354px;height:1px;background:#7a8a99"></div>
<svg class="abs" style="left:188px;top:376px" width="15" height="15" viewBox="0 0 15 15" shape-rendering="crispEdges"><rect x="0" y="0" width="12" height="1" fill="#7b3f00"/><rect x="0" y="1" width="2" height="1" fill="#7b3f00"/><rect x="2" y="1" width="3" height="1" fill="#fff"/><rect x="5" y="1" width="1" height="1" fill="#7b3f00"/><rect x="6" y="1" width="2" height="1" fill="#fff"/><rect x="8" y="1" width="1" height="1" fill="#7b3f00"/><rect x="9" y="1" width="2" height="1" fill="#fff"/><rect x="11" y="1" width="1" height="1" fill="#7b3f00"/><rect x="0" y="2" width="1" height="1" fill="#7b3f00"/><rect x="1" y="2" width="1" height="1" fill="#fff"/><rect x="2" y="2" width="12" height="1" fill="#7b3f00"/><rect x="0" y="3" width="1" height="1" fill="#7b3f00"/><rect x="1" y="3" width="1" height="1" fill="#fff"/><rect x="2" y="3" width="1" height="1" fill="#7b3f00"/><rect x="3" y="3" width="1" height="1" fill="#fff"/><rect x="4" y="3" width="1" height="1" fill="#7b3f00"/><rect x="5" y="3" width="2" height="1" fill="#fff"/><rect x="7" y="3" width="1" height="1" fill="#7b3f00"/><rect x="8" y="3" width="2" height="1" fill="#fff"/><rect x="10" y="3" width="2" height="1" fill="#7b3f00"/><rect x="12" y="3" width="1" height="1" fill="#fff"/><rect x="13" y="3" width="1" height="1" fill="#7b3f00"/><rect x="0" y="4" width="3" height="1" fill="#7b3f00"/><rect x="3" y="4" width="1" height="1" fill="#fff"/><rect x="4" y="4" width="11" height="1" fill="#7b3f00"/><rect x="0" y="5" width="1" height="1" fill="#7b3f00"/><rect x="1" y="5" width="1" height="1" fill="#fff"/><rect x="2" y="5" width="3" height="1" fill="#7b3f00"/><rect x="5" y="5" width="2" height="1" fill="#fff"/><rect x="7" y="5" width="1" height="1" fill="#7b3f00"/><rect x="8" y="5" width="3" height="1" fill="#fff"/><rect x="11" y="5" width="1" height="1" fill="#7b3f00"/><rect x="12" y="5" width="2" height="1" fill="#fff"/><rect x="14" y="5" width="1" height="1" fill="#7b3f00"/><rect x="0" y="6" width="1" height="1" fill="#7b3f00"/><rect x="1" y="6" width="1" height="1" fill="#fff"/><rect x="2" y="6" width="3" height="1" fill="#7b3f00"/><rect x="5" y="6" width="2" height="1" fill="#fff"/><rect x="7" y="6" width="1" height="1" fill="#7b3f00"/><rect x="8" y="6" width="3" height="1" fill="#fff"/><rect x="11" y="6" width="1" height="1" fill="#7b3f00"/><rect x="12" y="6" width="2" height="1" fill="#fff"/><rect x="14" y="6" width="1" height="1" fill="#7b3f00"/><rect x="0" y="7" width="3" height="1" fill="#7b3f00"/><rect x="3" y="7" width="1" height="1" fill="#fff"/><rect x="4" y="7" width="1" height="1" fill="#7b3f00"/><rect x="5" y="7" width="2" height="1" fill="#fff"/><rect x="7" y="7" width="1" height="1" fill="#7b3f00"/><rect x="8" y="7" width="3" height="1" fill="#fff"/><rect x="11" y="7" width="1" height="1" fill="#7b3f00"/><rect x="12" y="7" width="2" height="1" fill="#fff"/><rect x="14" y="7" width="1" height="1" fill="#7b3f00"/><rect x="0" y="8" width="1" height="1" fill="#7b3f00"/><rect x="1" y="8" width="1" height="1" fill="#fff"/><rect x="2" y="8" width="1" height="1" fill="#7b3f00"/><rect x="3" y="8" width="1" height="1" fill="#fff"/><rect x="4" y="8" width="11" height="1" fill="#7b3f00"/><rect x="0" y="9" width="1" height="1" fill="#7b3f00"/><rect x="1" y="9" width="1" height="1" fill="#fff"/><rect x="2" y="9" width="3" height="1" fill="#7b3f00"/><rect x="5" y="9" width="2" height="1" fill="#fff"/><rect x="7" y="9" width="1" height="1" fill="#7b3f00"/><rect x="8" y="9" width="3" height="1" fill="#fff"/><rect x="11" y="9" width="1" height="1" fill="#7b3f00"/><rect x="12" y="9" width="2" height="1" fill="#fff"/><rect x="14" y="9" width="1" height="1" fill="#7b3f00"/><rect x="0" y="10" width="1" height="1" fill="#7b3f00"/><rect x="1" y="10" width="1" height="1" fill="#fff"/><rect x="2" y="10" width="3" height="1" fill="#7b3f00"/><rect x="5" y="10" width="2" height="1" fill="#fff"/><rect x="7" y="10" width="1" height="1" fill="#7b3f00"/><rect x="8" y="10" width="3" height="1" fill="#fff"/><rect x="11" y="10" width="1" height="1" fill="#7b3f00"/><rect x="12" y="10" width="2" height="1" fill="#fff"/><rect x="14" y="10" width="1" height="1" fill="#7b3f00"/><rect x="0" y="11" width="3" height="1" fill="#7b3f00"/><rect x="3" y="11" width="1" height="1" fill="#fff"/><rect x="4" y="11" width="11" height="1" fill="#7b3f00"/><rect x="2" y="12" width="1" height="1" fill="#7b3f00"/><rect x="3" y="12" width="1" height="1" fill="#fff"/><rect x="4" y="12" width="1" height="1" fill="#7b3f00"/><rect x="5" y="12" width="2" height="1" fill="#fff"/><rect x="7" y="12" width="1" height="1" fill="#7b3f00"/><rect x="8" y="12" width="3" height="1" fill="#fff"/><rect x="11" y="12" width="1" height="1" fill="#7b3f00"/><rect x="12" y="12" width="2" height="1" fill="#fff"/><rect x="14" y="12" width="1" height="1" fill="#7b3f00"/><rect x="2" y="13" width="3" height="1" fill="#7b3f00"/><rect x="5" y="13" width="2" height="1" fill="#fff"/><rect x="7" y="13" width="1" height="1" fill="#7b3f00"/><rect x="8" y="13" width="3" height="1" fill="#fff"/><rect x="11" y="13" width="1" height="1" fill="#7b3f00"/><rect x="12" y="13" width="2" height="1" fill="#fff"/><rect x="14" y="13" width="1" height="1" fill="#7b3f00"/><rect x="4" y="14" width="11" height="1" fill="#7b3f00"/></svg>
<svg class="abs" style="left:493px;top:376px" width="14" height="14" viewBox="0 0 14 14" shape-rendering="crispEdges"><rect x="9" y="0" width="4" height="1" fill="#111"/><rect x="11" y="1" width="2" height="1" fill="#111"/><rect x="10" y="2" width="1" height="1" fill="#111"/><rect x="12" y="2" width="1" height="1" fill="#111"/><rect x="0" y="3" width="9" height="1" fill="#333"/><rect x="9" y="3" width="1" height="1" fill="#111"/><rect x="12" y="3" width="1" height="1" fill="#111"/><rect x="0" y="4" width="1" height="1" fill="#333"/><rect x="1" y="4" width="7" height="1" fill="#6382bf"/><rect x="8" y="4" width="1" height="1" fill="#111"/><rect x="9" y="4" width="1" height="1" fill="#6382bf"/><rect x="10" y="4" width="1" height="1" fill="#fff"/><rect x="0" y="5" width="1" height="1" fill="#333"/><rect x="1" y="5" width="1" height="1" fill="#6382bf"/><rect x="2" y="5" width="5" height="1" fill="#f6f9fc"/><rect x="7" y="5" width="1" height="1" fill="#111"/><rect x="8" y="5" width="2" height="1" fill="#6382bf"/><rect x="10" y="5" width="1" height="1" fill="#fff"/><rect x="0" y="6" width="1" height="1" fill="#333"/><rect x="1" y="6" width="1" height="1" fill="#6382bf"/><rect x="2" y="6" width="4" height="1" fill="#f6f9fc"/><rect x="6" y="6" width="1" height="1" fill="#111"/><rect x="7" y="6" width="1" height="1" fill="#f6f9fc"/><rect x="8" y="6" width="1" height="1" fill="#333"/><rect x="9" y="6" width="1" height="1" fill="#6382bf"/><rect x="10" y="6" width="1" height="1" fill="#fff"/><rect x="0" y="7" width="1" height="1" fill="#333"/><rect x="1" y="7" width="1" height="1" fill="#6382bf"/><rect x="2" y="7" width="3" height="1" fill="#f6f9fc"/><rect x="5" y="7" width="1" height="1" fill="#111"/><rect x="6" y="7" width="2" height="1" fill="#f6f9fc"/><rect x="8" y="7" width="1" height="1" fill="#333"/><rect x="9" y="7" width="1" height="1" fill="#6382bf"/><rect x="10" y="7" width="1" height="1" fill="#fff"/><rect x="0" y="8" width="1" height="1" fill="#333"/><rect x="1" y="8" width="1" height="1" fill="#6382bf"/><rect x="2" y="8" width="2" height="1" fill="#f6f9fc"/><rect x="4" y="8" width="1" height="1" fill="#111"/><rect x="5" y="8" width="3" height="1" fill="#f6f9fc"/><rect x="8" y="8" width="1" height="1" fill="#333"/><rect x="9" y="8" width="1" height="1" fill="#6382bf"/><rect x="10" y="8" width="1" height="1" fill="#fff"/><rect x="0" y="9" width="1" height="1" fill="#333"/><rect x="1" y="9" width="1" height="1" fill="#6382bf"/><rect x="2" y="9" width="1" height="1" fill="#f6f9fc"/><rect x="3" y="9" width="1" height="1" fill="#111"/><rect x="4" y="9" width="4" height="1" fill="#f6f9fc"/><rect x="8" y="9" width="1" height="1" fill="#333"/><rect x="9" y="9" width="1" height="1" fill="#6382bf"/><rect x="10" y="9" width="1" height="1" fill="#fff"/><rect x="0" y="10" width="1" height="1" fill="#333"/><rect x="1" y="10" width="1" height="1" fill="#6382bf"/><rect x="2" y="10" width="6" height="1" fill="#f6f9fc"/><rect x="8" y="10" width="1" height="1" fill="#333"/><rect x="9" y="10" width="1" height="1" fill="#6382bf"/><rect x="10" y="10" width="1" height="1" fill="#fff"/><rect x="0" y="11" width="1" height="1" fill="#333"/><rect x="1" y="11" width="2" height="1" fill="#6382bf"/><rect x="3" y="11" width="6" height="1" fill="#333"/><rect x="9" y="11" width="1" height="1" fill="#6382bf"/><rect x="10" y="11" width="1" height="1" fill="#fff"/><rect x="0" y="12" width="1" height="1" fill="#333"/><rect x="1" y="12" width="9" height="1" fill="#6382bf"/><rect x="10" y="12" width="1" height="1" fill="#fff"/><rect x="1" y="13" width="10" height="1" fill="#fff"/></svg>
<svg class="abs" style="left:518px;top:375px" width="15" height="15" viewBox="0 0 15 15" shape-rendering="crispEdges"><rect x="0" y="0" width="14" height="1" fill="#333"/><rect x="0" y="1" width="1" height="1" fill="#333"/><rect x="1" y="1" width="13" height="1" fill="#6382bf"/><rect x="14" y="1" width="1" height="1" fill="#fff"/><rect x="0" y="2" width="1" height="1" fill="#333"/><rect x="1" y="2" width="1" height="1" fill="#6382bf"/><rect x="2" y="2" width="10" height="1" fill="#f6f9fc"/><rect x="12" y="2" width="2" height="1" fill="#6382bf"/><rect x="14" y="2" width="1" height="1" fill="#fff"/><rect x="0" y="3" width="1" height="1" fill="#333"/><rect x="1" y="3" width="1" height="1" fill="#6382bf"/><rect x="2" y="3" width="1" height="1" fill="#f6f9fc"/><rect x="3" y="3" width="1" height="1" fill="#111"/><rect x="4" y="3" width="1" height="1" fill="#7d98cc"/><rect x="5" y="3" width="5" height="1" fill="#f6f9fc"/><rect x="10" y="3" width="1" height="1" fill="#111"/><rect x="11" y="3" width="1" height="1" fill="#7d98cc"/><rect x="12" y="3" width="1" height="1" fill="#333"/><rect x="13" y="3" width="1" height="1" fill="#6382bf"/><rect x="14" y="3" width="1" height="1" fill="#fff"/><rect x="0" y="4" width="1" height="1" fill="#333"/><rect x="1" y="4" width="1" height="1" fill="#6382bf"/><rect x="2" y="4" width="2" height="1" fill="#f6f9fc"/><rect x="4" y="4" width="1" height="1" fill="#111"/><rect x="5" y="4" width="1" height="1" fill="#7d98cc"/><rect x="6" y="4" width="3" height="1" fill="#f6f9fc"/><rect x="9" y="4" width="1" height="1" fill="#111"/><rect x="10" y="4" width="1" height="1" fill="#7d98cc"/><rect x="11" y="4" width="1" height="1" fill="#f6f9fc"/><rect x="12" y="4" width="1" height="1" fill="#333"/><rect x="13" y="4" width="1" height="1" fill="#6382bf"/><rect x="14" y="4" width="1" height="1" fill="#fff"/><rect x="0" y="5" width="1" height="1" fill="#333"/><rect x="1" y="5" width="1" height="1" fill="#6382bf"/><rect x="2" y="5" width="3" height="1" fill="#f6f9fc"/><rect x="5" y="5" width="1" height="1" fill="#111"/><rect x="6" y="5" width="1" height="1" fill="#7d98cc"/><rect x="7" y="5" width="1" height="1" fill="#f6f9fc"/><rect x="8" y="5" width="1" height="1" fill="#111"/><rect x="9" y="5" width="1" height="1" fill="#7d98cc"/><rect x="10" y="5" width="2" height="1" fill="#f6f9fc"/><rect x="12" y="5" width="1" height="1" fill="#333"/><rect x="13" y="5" width="1" height="1" fill="#6382bf"/><rect x="14" y="5" width="1" height="1" fill="#fff"/><rect x="0" y="6" width="1" height="1" fill="#333"/><rect x="1" y="6" width="1" height="1" fill="#6382bf"/><rect x="2" y="6" width="4" height="1" fill="#f6f9fc"/><rect x="6" y="6" width="1" height="1" fill="#111"/><rect x="7" y="6" width="2" height="1" fill="#7d98cc"/><rect x="9" y="6" width="3" height="1" fill="#f6f9fc"/><rect x="12" y="6" width="1" height="1" fill="#333"/><rect x="13" y="6" width="1" height="1" fill="#6382bf"/><rect x="14" y="6" width="1" height="1" fill="#fff"/><rect x="0" y="7" width="1" height="1" fill="#333"/><rect x="1" y="7" width="1" height="1" fill="#6382bf"/><rect x="2" y="7" width="4" height="1" fill="#f6f9fc"/><rect x="6" y="7" width="1" height="1" fill="#111"/><rect x="7" y="7" width="2" height="1" fill="#7d98cc"/><rect x="9" y="7" width="3" height="1" fill="#f6f9fc"/><rect x="12" y="7" width="1" height="1" fill="#333"/><rect x="13" y="7" width="1" height="1" fill="#6382bf"/><rect x="14" y="7" width="1" height="1" fill="#fff"/><rect x="0" y="8" width="1" height="1" fill="#333"/><rect x="1" y="8" width="1" height="1" fill="#6382bf"/><rect x="2" y="8" width="3" height="1" fill="#f6f9fc"/><rect x="5" y="8" width="1" height="1" fill="#111"/><rect x="6" y="8" width="1" height="1" fill="#7d98cc"/><rect x="7" y="8" width="1" height="1" fill="#f6f9fc"/><rect x="8" y="8" width="1" height="1" fill="#111"/><rect x="9" y="8" width="1" height="1" fill="#7d98cc"/><rect x="10" y="8" width="2" height="1" fill="#f6f9fc"/><rect x="12" y="8" width="1" height="1" fill="#333"/><rect x="13" y="8" width="1" height="1" fill="#6382bf"/><rect x="14" y="8" width="1" height="1" fill="#fff"/><rect x="0" y="9" width="1" height="1" fill="#333"/><rect x="1" y="9" width="1" height="1" fill="#6382bf"/><rect x="2" y="9" width="2" height="1" fill="#f6f9fc"/><rect x="4" y="9" width="1" height="1" fill="#111"/><rect x="5" y="9" width="1" height="1" fill="#7d98cc"/><rect x="6" y="9" width="3" height="1" fill="#f6f9fc"/><rect x="9" y="9" width="1" height="1" fill="#111"/><rect x="10" y="9" width="1" height="1" fill="#7d98cc"/><rect x="11" y="9" width="1" height="1" fill="#f6f9fc"/><rect x="12" y="9" width="1" height="1" fill="#333"/><rect x="13" y="9" width="1" height="1" fill="#6382bf"/><rect x="14" y="9" width="1" height="1" fill="#fff"/><rect x="0" y="10" width="1" height="1" fill="#333"/><rect x="1" y="10" width="1" height="1" fill="#6382bf"/><rect x="2" y="10" width="1" height="1" fill="#f6f9fc"/><rect x="3" y="10" width="1" height="1" fill="#111"/><rect x="4" y="10" width="1" height="1" fill="#7d98cc"/><rect x="5" y="10" width="5" height="1" fill="#f6f9fc"/><rect x="10" y="10" width="1" height="1" fill="#111"/><rect x="11" y="10" width="1" height="1" fill="#7d98cc"/><rect x="12" y="10" width="1" height="1" fill="#333"/><rect x="13" y="10" width="1" height="1" fill="#6382bf"/><rect x="14" y="10" width="1" height="1" fill="#fff"/><rect x="0" y="11" width="1" height="1" fill="#333"/><rect x="1" y="11" width="1" height="1" fill="#6382bf"/><rect x="2" y="11" width="10" height="1" fill="#f6f9fc"/><rect x="12" y="11" width="1" height="1" fill="#333"/><rect x="13" y="11" width="1" height="1" fill="#6382bf"/><rect x="14" y="11" width="1" height="1" fill="#fff"/><rect x="0" y="12" width="1" height="1" fill="#333"/><rect x="1" y="12" width="2" height="1" fill="#6382bf"/><rect x="3" y="12" width="10" height="1" fill="#333"/><rect x="13" y="12" width="1" height="1" fill="#6382bf"/><rect x="14" y="12" width="1" height="1" fill="#fff"/><rect x="0" y="13" width="1" height="1" fill="#333"/><rect x="1" y="13" width="13" height="1" fill="#6382bf"/><rect x="14" y="13" width="1" height="1" fill="#fff"/><rect x="1" y="14" width="14" height="1" fill="#fff"/></svg>
<div class="abs" style="left:183px;top:394px;width:354px;height:26px;background:linear-gradient(#fff 0,#dcdcdc 100%)"></div>
<div class="abs" style="left:183px;top:420px;width:354px;height:1px;background:#eee"></div>
<div class="btn" style="left:250px;top:394px"></div>
<svg class="abs" style="left:255px;top:397px" width="22" height="22" viewBox="0 0 22 22">
<g shape-rendering="crispEdges">
<rect x="0" y="-1" width="21" height="21" fill="#fff" opacity=".35"/>
<rect x="3" y="7" width="2" height="12" fill="#8b0000"/>
<rect x="8" y="12" width="2" height="7" fill="#8b0000"/>
<rect x="13" y="7" width="2" height="12" fill="#8b0000"/>
<rect x="18" y="3" width="2" height="16" fill="#8b0000"/>
<rect x="0" y="0" width="1" height="20" fill="#000"/>
<rect x="0" y="19" width="20" height="1" fill="#000"/>
</g>
<polyline points="1,6.5 3.5,4.5 9.5,10.5 18.5,1.5 20,3" fill="none" stroke="#0000ff" stroke-width="0.95"/>
<polyline points="1,15.5 4.5,12.5 9.5,17.5 12.5,14.5 15.5,17.5 20,13.3" fill="none" stroke="#00e000" stroke-width="0.95"/>
</svg>
<div class="abs" style="left:183px;top:421px;width:354px;height:1px;background:#e9e6e3"></div>
<div class="abs" style="left:183px;top:422px;width:354px;height:1px;background:#7a8a99"></div>
<div class="abs" style="left:183px;top:422px;width:352px;height:24px;background:#7a8a99"></div>
<div class="abs" style="left:184px;top:422px;width:74px;height:24px;background:#999"></div>
<div class="abs" style="left:184px;top:422px;width:74px;height:1px;background:#848f9b"></div>
<div class="abs" style="left:185px;top:423px;width:74px;height:24px;background:#fff"></div>
<div class="abs" style="left:185px;top:423px;width:72px;height:22px;background:#999"></div>
<div class="abs" style="left:185px;top:423px;width:72px;height:22px;background:#fff"></div>
<div class="abs" style="left:186px;top:424px;width:71px;height:21px;background:#eee"></div>
<div class="abs" style="left:184px;top:445px;width:74px;height:1px;background:#999"></div>
<div class="abs" style="left:257px;top:422px;width:1px;height:24px;background:#999"></div>
<div class="abs" style="left:259px;top:422px;width:276px;height:24px;background:#7a8a99"></div>
<div class="abs" style="left:260px;top:424px;width:274px;height:21px;background:#fffff0"></div>
<div class="abs" style="left:535px;top:423px;width:2px;height:24px;background:#fff"></div>
<div class="abs" style="left:183px;top:446px;width:354px;height:2px;background:#fff"></div>
<svg class="abs" style="left:186px;top:450px" width="347" height="4" shape-rendering="crispEdges"><defs><pattern id="bp3" width="4" height="4" patternUnits="userSpaceOnUse"><rect x="0" y="0" width="1" height="1" fill="#fff"/><rect x="1" y="1" width="1" height="1" fill="#7a8a99"/><rect x="2" y="2" width="1" height="1" fill="#fff"/><rect x="3" y="3" width="1" height="1" fill="#7a8a99"/></pattern></defs><rect width="347" height="4" fill="url(#bp3)"/></svg>
<div class="abs" style="left:183px;top:456px;width:352px;height:391px;background:#7a8a99"></div>
<div class="abs" style="left:183px;top:847px;width:354px;height:2px;background:#fff"></div>
<div class="abs" style="left:535px;top:457px;width:2px;height:392px;background:#fff"></div>
<div class="abs" style="left:535px;top:456px;width:2px;height:1px;background:#7a8a99"></div>
<div class="abs" style="left:185px;top:458px;width:349px;height:388px;background:#eee"></div>
<div class="abs" style="left:185px;top:458px;width:73px;height:19px;background:#eee;border-left:1px solid #fff;border-top:1px solid #fff;box-sizing:border-box"></div>
<div class="abs" style="left:260px;top:477px;width:225px;height:360px;background:#fff"></div>
<div class="abs" style="left:258px;top:477px;width:2px;height:360px;background:#7a8a99"></div>
<div class="ch" style="left:260px;top:458px"></div>
<div class="ch" style="left:335px;top:458px"></div>
<div class="ch" style="left:410px;top:458px"></div>
<div class="rh" style="left:185px;top:477px"></div>
<div class="abs" style="left:260px;top:491px;width:225px;height:1px;background:#808080"></div>
<div class="rh" style="left:185px;top:492px"></div>
<div class="abs" style="left:260px;top:506px;width:225px;height:1px;background:#808080"></div>
<div class="rh" style="left:185px;top:507px"></div>
<div class="abs" style="left:260px;top:521px;width:225px;height:1px;background:#808080"></div>
<div class="rh" style="left:185px;top:522px"></div>
<div class="abs" style="left:260px;top:536px;width:225px;height:1px;background:#808080"></div>
<div class="rh" style="left:185px;top:537px"></div>
<div class="abs" style="left:260px;top:551px;width:225px;height:1px;background:#808080"></div>
<div class="rh" style="left:185px;top:552px"></div>
<div class="abs" style="left:260px;top:566px;width:225px;height:1px;background:#808080"></div>
<div class="rh" style="left:185px;top:567px"></div>
<div class="abs" style="left:260px;top:581px;width:225px;height:1px;background:#808080"></div>
<div class="rh" style="left:185px;top:582px"></div>
<div class="abs" style="left:260px;top:596px;width:225px;height:1px;background:#808080"></div>
<div class="rh" style="left:185px;top:597px"></div>
<div class="abs" style="left:260px;top:611px;width:225px;height:1px;background:#808080"></div>
<div class="rh" style="left:185px;top:612px"></div>
<div class="abs" style="left:260px;top:626px;width:225px;height:1px;background:#808080"></div>
<div class="rh" style="left:185px;top:627px"></div>
<div class="abs" style="left:260px;top:641px;width:225px;height:1px;background:#808080"></div>
<div class="rh" style="left:185px;top:642px"></div>
<div class="abs" style="left:260px;top:656px;width:225px;height:1px;background:#808080"></div>
<div class="rh" style="left:185px;top:657px"></div>
<div class="abs" style="left:260px;top:671px;width:225px;height:1px;background:#808080"></div>
<div class="rh" style="left:185px;top:672px"></div>
<div class="abs" style="left:260px;top:686px;width:225px;height:1px;background:#808080"></div>
<div class="rh" style="left:185px;top:687px"></div>
<div class="abs" style="left:260px;top:701px;width:225px;height:1px;background:#808080"></div>
<div class="rh" style="left:185px;top:702px"></div>
<div class="abs" style="left:260px;top:716px;width:225px;height:1px;background:#808080"></div>
<div class="rh" style="left:185px;top:717px"></div>
<div class="abs" style="left:260px;top:731px;width:225px;height:1px;background:#808080"></div>
<div class="rh" style="left:185px;top:732px"></div>
<div class="abs" style="left:260px;top:746px;width:225px;height:1px;background:#808080"></div>
<div class="rh" style="left:185px;top:747px"></div>
<div class="abs" style="left:260px;top:761px;width:225px;height:1px;background:#808080"></div>
<div class="rh" style="left:185px;top:762px"></div>
<div class="abs" style="left:260px;top:776px;width:225px;height:1px;background:#808080"></div>
<div class="rh" style="left:185px;top:777px"></div>
<div class="abs" style="left:260px;top:791px;width:225px;height:1px;background:#808080"></div>
<div class="rh" style="left:185px;top:792px"></div>
<div class="abs" style="left:260px;top:806px;width:225px;height:1px;background:#808080"></div>
<div class="rh" style="left:185px;top:807px"></div>
<div class="abs" style="left:260px;top:821px;width:225px;height:1px;background:#808080"></div>
<div class="rh" style="left:185px;top:822px"></div>
<div class="abs" style="left:260px;top:836px;width:225px;height:1px;background:#808080"></div>
<div class="abs" style="left:334px;top:477px;width:1px;height:360px;background:#808080"></div>
<div class="abs" style="left:409px;top:477px;width:1px;height:360px;background:#808080"></div>
<div class="abs" style="left:484px;top:477px;width:1px;height:360px;background:#808080"></div>
<div id="tl">
<span class="tx" style="left:22.95px;top:9px;letter-spacing:0.429px;transform:scaleX(1.0500)">mixed.h5</span>
<span class="tx" style="left:42.95px;top:32px;letter-spacing:0.524px;transform:scaleX(1.0500)">Domain</span>
<span class="tx" style="left:62.95px;top:55px;letter-spacing:0.024px;transform:scaleX(1.0500)">Cells</span>
<span class="tx" style="left:62.70px;top:78px;letter-spacing:0.626px;transform:scaleX(1.0500)">Vertices</span>
<span class="tx" style="left:172.30px;top:13px;letter-spacing:0.208px;transform:scaleX(1.0500)">TableView</span>
<span class="tx" style="left:241.97px;top:13px;letter-spacing:0.000px;transform:scaleX(1.2333)">-</span>
<span class="tx" style="left:252.95px;top:13px;letter-spacing:0.190px;transform:scaleX(1.0500)">Cells</span>
<span class="tx" style="left:290.57px;top:13px;letter-spacing:0.000px;transform:scaleX(1.2333)">-</span>
<span class="tx" style="left:303.00px;top:13px;letter-spacing:0.286px;transform:scaleX(1.0500)">/Domain/</span>
<span class="tx" style="left:365.77px;top:13px;letter-spacing:0.000px;transform:scaleX(1.2333)">-</span>
<span class="tx" style="left:378.00px;top:13px;letter-spacing:0.479px;transform:scaleX(1.0500)">/home</span>
<span class="tx" style="left:417.00px;top:13px;letter-spacing:0.522px;transform:scaleX(1.0500)">/gehammo</span>
<span class="tx" style="left:483.40px;top:13px;letter-spacing:0.407px;transform:scaleX(1.0500)">/software</span>
<span class="tx" style="left:540.50px;top:13px;letter-spacing:0.536px;transform:scaleX(1.0500)">/pflotran</span>
<span class="tx" style="left:593.00px;top:13px;letter-spacing:0.546px;transform:scaleX(1.0500)">/regression_tests</span>
<span class="tx" style="left:702.70px;top:13px;letter-spacing:0.552px;transform:scaleX(1.0500)">/default</span>
<span class="tx" style="left:750.40px;top:13px;letter-spacing:0.409px;transform:scaleX(1.0500)">/discretization</span>
<span class="tx" style="left:837.10px;top:13px;letter-spacing:0.560px;transform:scaleX(1.0500)">/m...</span>
<span class="tx" style="left:208.40px;top:376px;letter-spacing:0.208px;transform:scaleX(1.0500)">TableView</span>
<span class="tx" style="left:278.67px;top:376px;letter-spacing:0.000px;transform:scaleX(1.2333)">-</span>
<span class="tx" style="left:290.30px;top:376px;letter-spacing:0.490px;transform:scaleX(1.0500)">Vertices</span>
<span class="tx" style="left:348.77px;top:376px;letter-spacing:0.000px;transform:scaleX(1.2333)">-</span>
<span class="tx" style="left:360.40px;top:376px;letter-spacing:0.435px;transform:scaleX(1.0500)">/Domain/</span>
<span class="tx" style="left:424.77px;top:376px;letter-spacing:0.000px;transform:scaleX(1.2333)">-</span>
<span class="tx" style="left:435.30px;top:376px;letter-spacing:0.544px;transform:scaleX(1.0500)">/home...</span>
<span class="tx" style="left:153.00px;top:37px;letter-spacing:0.429px;transform:scaleX(1.0500)"><u>T</u>able</span>
<span class="tx" style="left:189.00px;top:400px;letter-spacing:0.429px;transform:scaleX(1.0500)"><u>T</u>able</span>
<span class="ct" style="left:232px;top:98px">0</span>
<span class="ct" style="left:307px;top:98px">1</span>
<span class="ct" style="left:382px;top:98px">2</span>
<span class="ct" style="left:457px;top:98px">3</span>
<span class="ct" style="left:532px;top:98px">4</span>
<span class="ct" style="left:607px;top:98px">5</span>
<span class="ct" style="left:682px;top:98px">6</span>
<span class="ct" style="left:757px;top:98px">7</span>
<span class="ct" style="left:832px;top:98px">8</span>
<span class="ct" style="left:157px;top:115px">0</span>
<span class="dc" style="left:224.95px;top:115px">5</span>
<span class="dc" style="left:301.00px;top:115px">4</span>
<span class="dc" style="left:374.95px;top:115px">5</span>
<span class="dc" style="left:449.95px;top:115px">6</span>
<span class="dc" style="left:524.95px;top:115px">2</span>
<span class="dc" style="left:599.95px;top:115px">1</span>
<span class="dc" style="left:676.00px;top:115px">0</span>
<span class="dc" style="left:751.00px;top:115px">0</span>
<span class="dc" style="left:826.00px;top:115px">0</span>
<span class="ct" style="left:157px;top:130px">1</span>
<span class="dc" style="left:226.00px;top:130px">4</span>
<span class="dc" style="left:301.00px;top:130px">4</span>
<span class="dc" style="left:374.95px;top:130px">3</span>
<span class="dc" style="left:449.95px;top:130px">5</span>
<span class="dc" style="left:524.95px;top:130px">1</span>
<span class="dc" style="left:601.00px;top:130px">0</span>
<span class="dc" style="left:676.00px;top:130px">0</span>
<span class="dc" style="left:751.00px;top:130px">0</span>
<span class="dc" style="left:826.00px;top:130px">0</span>
<span class="ct" style="left:157px;top:145px">2</span>
<span class="dc" style="left:224.95px;top:145px">6</span>
<span class="dc" style="left:299.95px;top:145px">2</span>
<span class="dc" style="left:374.95px;top:145px">7</span>
<span class="dc" style="left:449.95px;top:145px">6</span>
<span class="dc" style="left:526.00px;top:145px">4</span>
<span class="dc" style="left:599.95px;top:145px">9</span>
<span class="dc" style="left:674.95px;top:145px">5</span>
<span class="dc" style="left:751.00px;top:145px">0</span>
<span class="dc" style="left:826.00px;top:145px">0</span>
<span class="ct" style="left:157px;top:160px">3</span>
<span class="dc" style="left:224.95px;top:160px">6</span>
<span class="dc" style="left:299.95px;top:160px">8</span>
<span class="dc" style="left:374.95px;top:160px">7</span>
<span class="dc" style="left:449.95px;top:160px">2</span>
<span class="dc" style="left:524.95px;top:160px">10</span>
<span class="dc" style="left:599.95px;top:160px">9</span>
<span class="dc" style="left:676.00px;top:160px">4</span>
<span class="dc" style="left:751.00px;top:160px">0</span>
<span class="dc" style="left:826.00px;top:160px">0</span>
<span class="ct" style="left:157px;top:175px">4</span>
<span class="dc" style="left:224.95px;top:175px">6</span>
<span class="dc" style="left:299.95px;top:175px">10</span>
<span class="dc" style="left:374.95px;top:175px">9</span>
<span class="dc" style="left:451.00px;top:175px">4</span>
<span class="dc" style="left:524.95px;top:175px">21</span>
<span class="dc" style="left:599.95px;top:175px">14</span>
<span class="dc" style="left:674.95px;top:175px">11</span>
<span class="dc" style="left:751.00px;top:175px">0</span>
<span class="dc" style="left:826.00px;top:175px">0</span>
<span class="ct" style="left:157px;top:190px">5</span>
<span class="dc" style="left:224.95px;top:190px">8</span>
<span class="dc" style="left:299.95px;top:190px">19</span>
<span class="dc" style="left:374.95px;top:190px">9</span>
<span class="dc" style="left:449.95px;top:190px">5</span>
<span class="dc" style="left:524.95px;top:190px">12</span>
<span class="dc" style="left:599.95px;top:190px">17</span>
<span class="dc" style="left:674.95px;top:190px">7</span>
<span class="dc" style="left:749.95px;top:190px">6</span>
<span class="dc" style="left:824.95px;top:190px">16</span>
<span class="ct" style="left:157px;top:205px">6</span>
<span class="dc" style="left:226.00px;top:205px">4</span>
<span class="dc" style="left:299.95px;top:205px">5</span>
<span class="dc" style="left:374.95px;top:205px">13</span>
<span class="dc" style="left:449.95px;top:205px">14</span>
<span class="dc" style="left:524.95px;top:205px">15</span>
<span class="dc" style="left:601.00px;top:205px">0</span>
<span class="dc" style="left:676.00px;top:205px">0</span>
<span class="dc" style="left:751.00px;top:205px">0</span>
<span class="dc" style="left:826.00px;top:205px">0</span>
<span class="ct" style="left:157px;top:220px">7</span>
<span class="dc" style="left:226.00px;top:220px">4</span>
<span class="dc" style="left:299.95px;top:220px">5</span>
<span class="dc" style="left:374.95px;top:220px">14</span>
<span class="dc" style="left:449.95px;top:220px">9</span>
<span class="dc" style="left:524.95px;top:220px">15</span>
<span class="dc" style="left:601.00px;top:220px">0</span>
<span class="dc" style="left:676.00px;top:220px">0</span>
<span class="dc" style="left:751.00px;top:220px">0</span>
<span class="dc" style="left:826.00px;top:220px">0</span>
<span class="ct" style="left:157px;top:235px">8</span>
<span class="dc" style="left:224.95px;top:235px">5</span>
<span class="dc" style="left:299.95px;top:235px">5</span>
<span class="dc" style="left:374.95px;top:235px">9</span>
<span class="dc" style="left:449.95px;top:235px">19</span>
<span class="dc" style="left:524.95px;top:235px">12</span>
<span class="dc" style="left:599.95px;top:235px">15</span>
<span class="dc" style="left:676.00px;top:235px">0</span>
<span class="dc" style="left:751.00px;top:235px">0</span>
<span class="dc" style="left:826.00px;top:235px">0</span>
<span class="ct" style="left:157px;top:250px">9</span>
<span class="dc" style="left:224.95px;top:250px">5</span>
<span class="dc" style="left:299.95px;top:250px">13</span>
<span class="dc" style="left:374.95px;top:250px">5</span>
<span class="dc" style="left:449.95px;top:250px">12</span>
<span class="dc" style="left:524.95px;top:250px">22</span>
<span class="dc" style="left:599.95px;top:250px">15</span>
<span class="dc" style="left:676.00px;top:250px">0</span>
<span class="dc" style="left:751.00px;top:250px">0</span>
<span class="dc" style="left:826.00px;top:250px">0</span>
<span class="ct" style="left:157px;top:265px">10</span>
<span class="dc" style="left:224.95px;top:265px">8</span>
<span class="dc" style="left:299.95px;top:265px">20</span>
<span class="dc" style="left:374.95px;top:265px">10</span>
<span class="dc" style="left:449.95px;top:265px">9</span>
<span class="dc" style="left:524.95px;top:265px">19</span>
<span class="dc" style="left:599.95px;top:265px">18</span>
<span class="dc" style="left:674.95px;top:265px">8</span>
<span class="dc" style="left:749.95px;top:265px">7</span>
<span class="dc" style="left:824.95px;top:265px">17</span>
<span class="ct" style="left:157px;top:280px">11</span>
<span class="dc" style="left:224.95px;top:280px">8</span>
<span class="dc" style="left:299.95px;top:280px">24</span>
<span class="dc" style="left:374.95px;top:280px">21</span>
<span class="dc" style="left:449.95px;top:280px">14</span>
<span class="dc" style="left:524.95px;top:280px">23</span>
<span class="dc" style="left:599.95px;top:280px">20</span>
<span class="dc" style="left:674.95px;top:280px">10</span>
<span class="dc" style="left:749.95px;top:280px">9</span>
<span class="dc" style="left:824.95px;top:280px">19</span>
<span class="ct" style="left:157px;top:295px">12</span>
<span class="dc" style="left:224.95px;top:295px">5</span>
<span class="dc" style="left:299.95px;top:295px">23</span>
<span class="dc" style="left:374.95px;top:295px">19</span>
<span class="dc" style="left:449.95px;top:295px">9</span>
<span class="dc" style="left:524.95px;top:295px">14</span>
<span class="dc" style="left:599.95px;top:295px">15</span>
<span class="dc" style="left:676.00px;top:295px">0</span>
<span class="dc" style="left:751.00px;top:295px">0</span>
<span class="dc" style="left:826.00px;top:295px">0</span>
<span class="ct" style="left:157px;top:310px">13</span>
<span class="dc" style="left:224.95px;top:310px">5</span>
<span class="dc" style="left:299.95px;top:310px">22</span>
<span class="dc" style="left:374.95px;top:310px">12</span>
<span class="dc" style="left:449.95px;top:310px">19</span>
<span class="dc" style="left:524.95px;top:310px">23</span>
<span class="dc" style="left:599.95px;top:310px">15</span>
<span class="dc" style="left:676.00px;top:310px">0</span>
<span class="dc" style="left:751.00px;top:310px">0</span>
<span class="dc" style="left:826.00px;top:310px">0</span>
<span class="ct" style="left:157px;top:325px">14</span>
<span class="dc" style="left:224.95px;top:325px">5</span>
<span class="dc" style="left:299.95px;top:325px">22</span>
<span class="dc" style="left:374.95px;top:325px">23</span>
<span class="dc" style="left:449.95px;top:325px">14</span>
<span class="dc" style="left:524.95px;top:325px">13</span>
<span class="dc" style="left:599.95px;top:325px">15</span>
<span class="dc" style="left:676.00px;top:325px">0</span>
<span class="dc" style="left:751.00px;top:325px">0</span>
<span class="dc" style="left:826.00px;top:325px">0</span>
<span class="ct" style="left:268px;top:461px">0</span>
<span class="ct" style="left:343px;top:461px">1</span>
<span class="ct" style="left:418px;top:461px">2</span>
<span class="ct" style="left:193px;top:478px">0</span>
<span class="dc" style="left:260.95px;top:478px">5.0</span>
<span class="dc" style="left:335.95px;top:478px">5.0</span>
<span class="dc" style="left:410.95px;top:478px">5.0</span>
<span class="ct" style="left:193px;top:493px">1</span>
<span class="dc" style="left:260.95px;top:493px">5.0</span>
<span class="dc" style="left:335.95px;top:493px">2.5</span>
<span class="dc" style="left:410.95px;top:493px">5.0</span>
<span class="ct" style="left:193px;top:508px">2</span>
<span class="dc" style="left:260.95px;top:508px">5.0</span>
<span class="dc" style="left:335.95px;top:508px">5.0</span>
<span class="dc" style="left:410.95px;top:508px">2.5</span>
<span class="ct" style="left:193px;top:523px">3</span>
<span class="dc" style="left:260.95px;top:523px">5.0</span>
<span class="dc" style="left:335.95px;top:523px">2.5</span>
<span class="dc" style="left:410.95px;top:523px">2.5</span>
<span class="ct" style="left:193px;top:538px">4</span>
<span class="dc" style="left:260.95px;top:538px">2.5</span>
<span class="dc" style="left:335.95px;top:538px">5.0</span>
<span class="dc" style="left:410.95px;top:538px">2.5</span>
<span class="ct" style="left:193px;top:553px">5</span>
<span class="dc" style="left:260.95px;top:553px">2.5</span>
<span class="dc" style="left:335.95px;top:553px">5.0</span>
<span class="dc" style="left:410.95px;top:553px">5.0</span>
<span class="ct" style="left:193px;top:568px">6</span>
<span class="dc" style="left:260.95px;top:568px">2.5</span>
<span class="dc" style="left:335.95px;top:568px">2.5</span>
<span class="dc" style="left:410.95px;top:568px">5.0</span>
<span class="ct" style="left:193px;top:583px">7</span>
<span class="dc" style="left:260.95px;top:583px">2.5</span>
<span class="dc" style="left:337.00px;top:583px">0.0</span>
<span class="dc" style="left:410.95px;top:583px">5.0</span>
<span class="ct" style="left:193px;top:598px">8</span>
<span class="dc" style="left:260.95px;top:598px">2.5</span>
<span class="dc" style="left:335.95px;top:598px">2.5</span>
<span class="dc" style="left:410.95px;top:598px">2.5</span>
<span class="ct" style="left:193px;top:613px">9</span>
<span class="dc" style="left:260.95px;top:613px">2.5</span>
<span class="dc" style="left:337.00px;top:613px">0.0</span>
<span class="dc" style="left:410.95px;top:613px">2.5</span>
<span class="ct" style="left:193px;top:628px">10</span>
<span class="dc" style="left:260.95px;top:628px">5.0</span>
<span class="dc" style="left:335.95px;top:628px">2.5</span>
<span class="dc" style="left:412.00px;top:628px">0.0</span>
<span class="ct" style="left:193px;top:643px">11</span>
<span class="dc" style="left:262.00px;top:643px">0.0</span>
<span class="dc" style="left:335.95px;top:643px">5.0</span>
<span class="dc" style="left:410.95px;top:643px">2.5</span>
<span class="ct" style="left:193px;top:658px">12</span>
<span class="dc" style="left:260.95px;top:658px">2.5</span>
<span class="dc" style="left:335.95px;top:658px">5.0</span>
<span class="dc" style="left:412.00px;top:658px">0.0</span>
<span class="ct" style="left:193px;top:673px">13</span>
<span class="dc" style="left:260.95px;top:673px">2.5</span>
<span class="dc" style="left:335.95px;top:673px">2.5</span>
<span class="dc" style="left:412.00px;top:673px">0.0</span>
<span class="ct" style="left:193px;top:688px">14</span>
<span class="dc" style="left:260.95px;top:688px">1.25</span>
<span class="dc" style="left:335.95px;top:688px">3.75</span>
<span class="dc" style="left:410.95px;top:688px">1.25</span>
<span class="ct" style="left:193px;top:703px">15</span>
<span class="dc" style="left:262.00px;top:703px">0.0</span>
<span class="dc" style="left:335.95px;top:703px">5.0</span>
<span class="dc" style="left:410.95px;top:703px">5.0</span>
<span class="ct" style="left:193px;top:718px">16</span>
<span class="dc" style="left:262.00px;top:718px">0.0</span>
<span class="dc" style="left:335.95px;top:718px">2.5</span>
<span class="dc" style="left:410.95px;top:718px">5.0</span>
<span class="ct" style="left:193px;top:733px">17</span>
<span class="dc" style="left:262.00px;top:733px">0.0</span>
<span class="dc" style="left:337.00px;top:733px">0.0</span>
<span class="dc" style="left:410.95px;top:733px">5.0</span>
<span class="ct" style="left:193px;top:748px">18</span>
<span class="dc" style="left:262.00px;top:748px">0.0</span>
<span class="dc" style="left:335.95px;top:748px">2.5</span>
<span class="dc" style="left:410.95px;top:748px">2.5</span>
<span class="ct" style="left:193px;top:763px">19</span>
<span class="dc" style="left:262.00px;top:763px">0.0</span>
<span class="dc" style="left:337.00px;top:763px">0.0</span>
<span class="dc" style="left:410.95px;top:763px">2.5</span>
<span class="ct" style="left:193px;top:778px">20</span>
<span class="dc" style="left:260.95px;top:778px">2.5</span>
<span class="dc" style="left:337.00px;top:778px">0.0</span>
<span class="dc" style="left:412.00px;top:778px">0.0</span>
<span class="ct" style="left:193px;top:793px">21</span>
<span class="dc" style="left:262.00px;top:793px">0.0</span>
<span class="dc" style="left:335.95px;top:793px">5.0</span>
<span class="dc" style="left:412.00px;top:793px">0.0</span>
<span class="ct" style="left:193px;top:808px">22</span>
<span class="dc" style="left:262.00px;top:808px">0.0</span>
<span class="dc" style="left:335.95px;top:808px">2.5</span>
<span class="dc" style="left:412.00px;top:808px">0.0</span>
<span class="ct" style="left:193px;top:823px">23</span>
<span class="dc" style="left:262.00px;top:823px">0.0</span>
<span class="dc" style="left:337.00px;top:823px">0.0</span>
<span class="dc" style="left:412.00px;top:823px">0.0</span>
</div>
</body></html>
